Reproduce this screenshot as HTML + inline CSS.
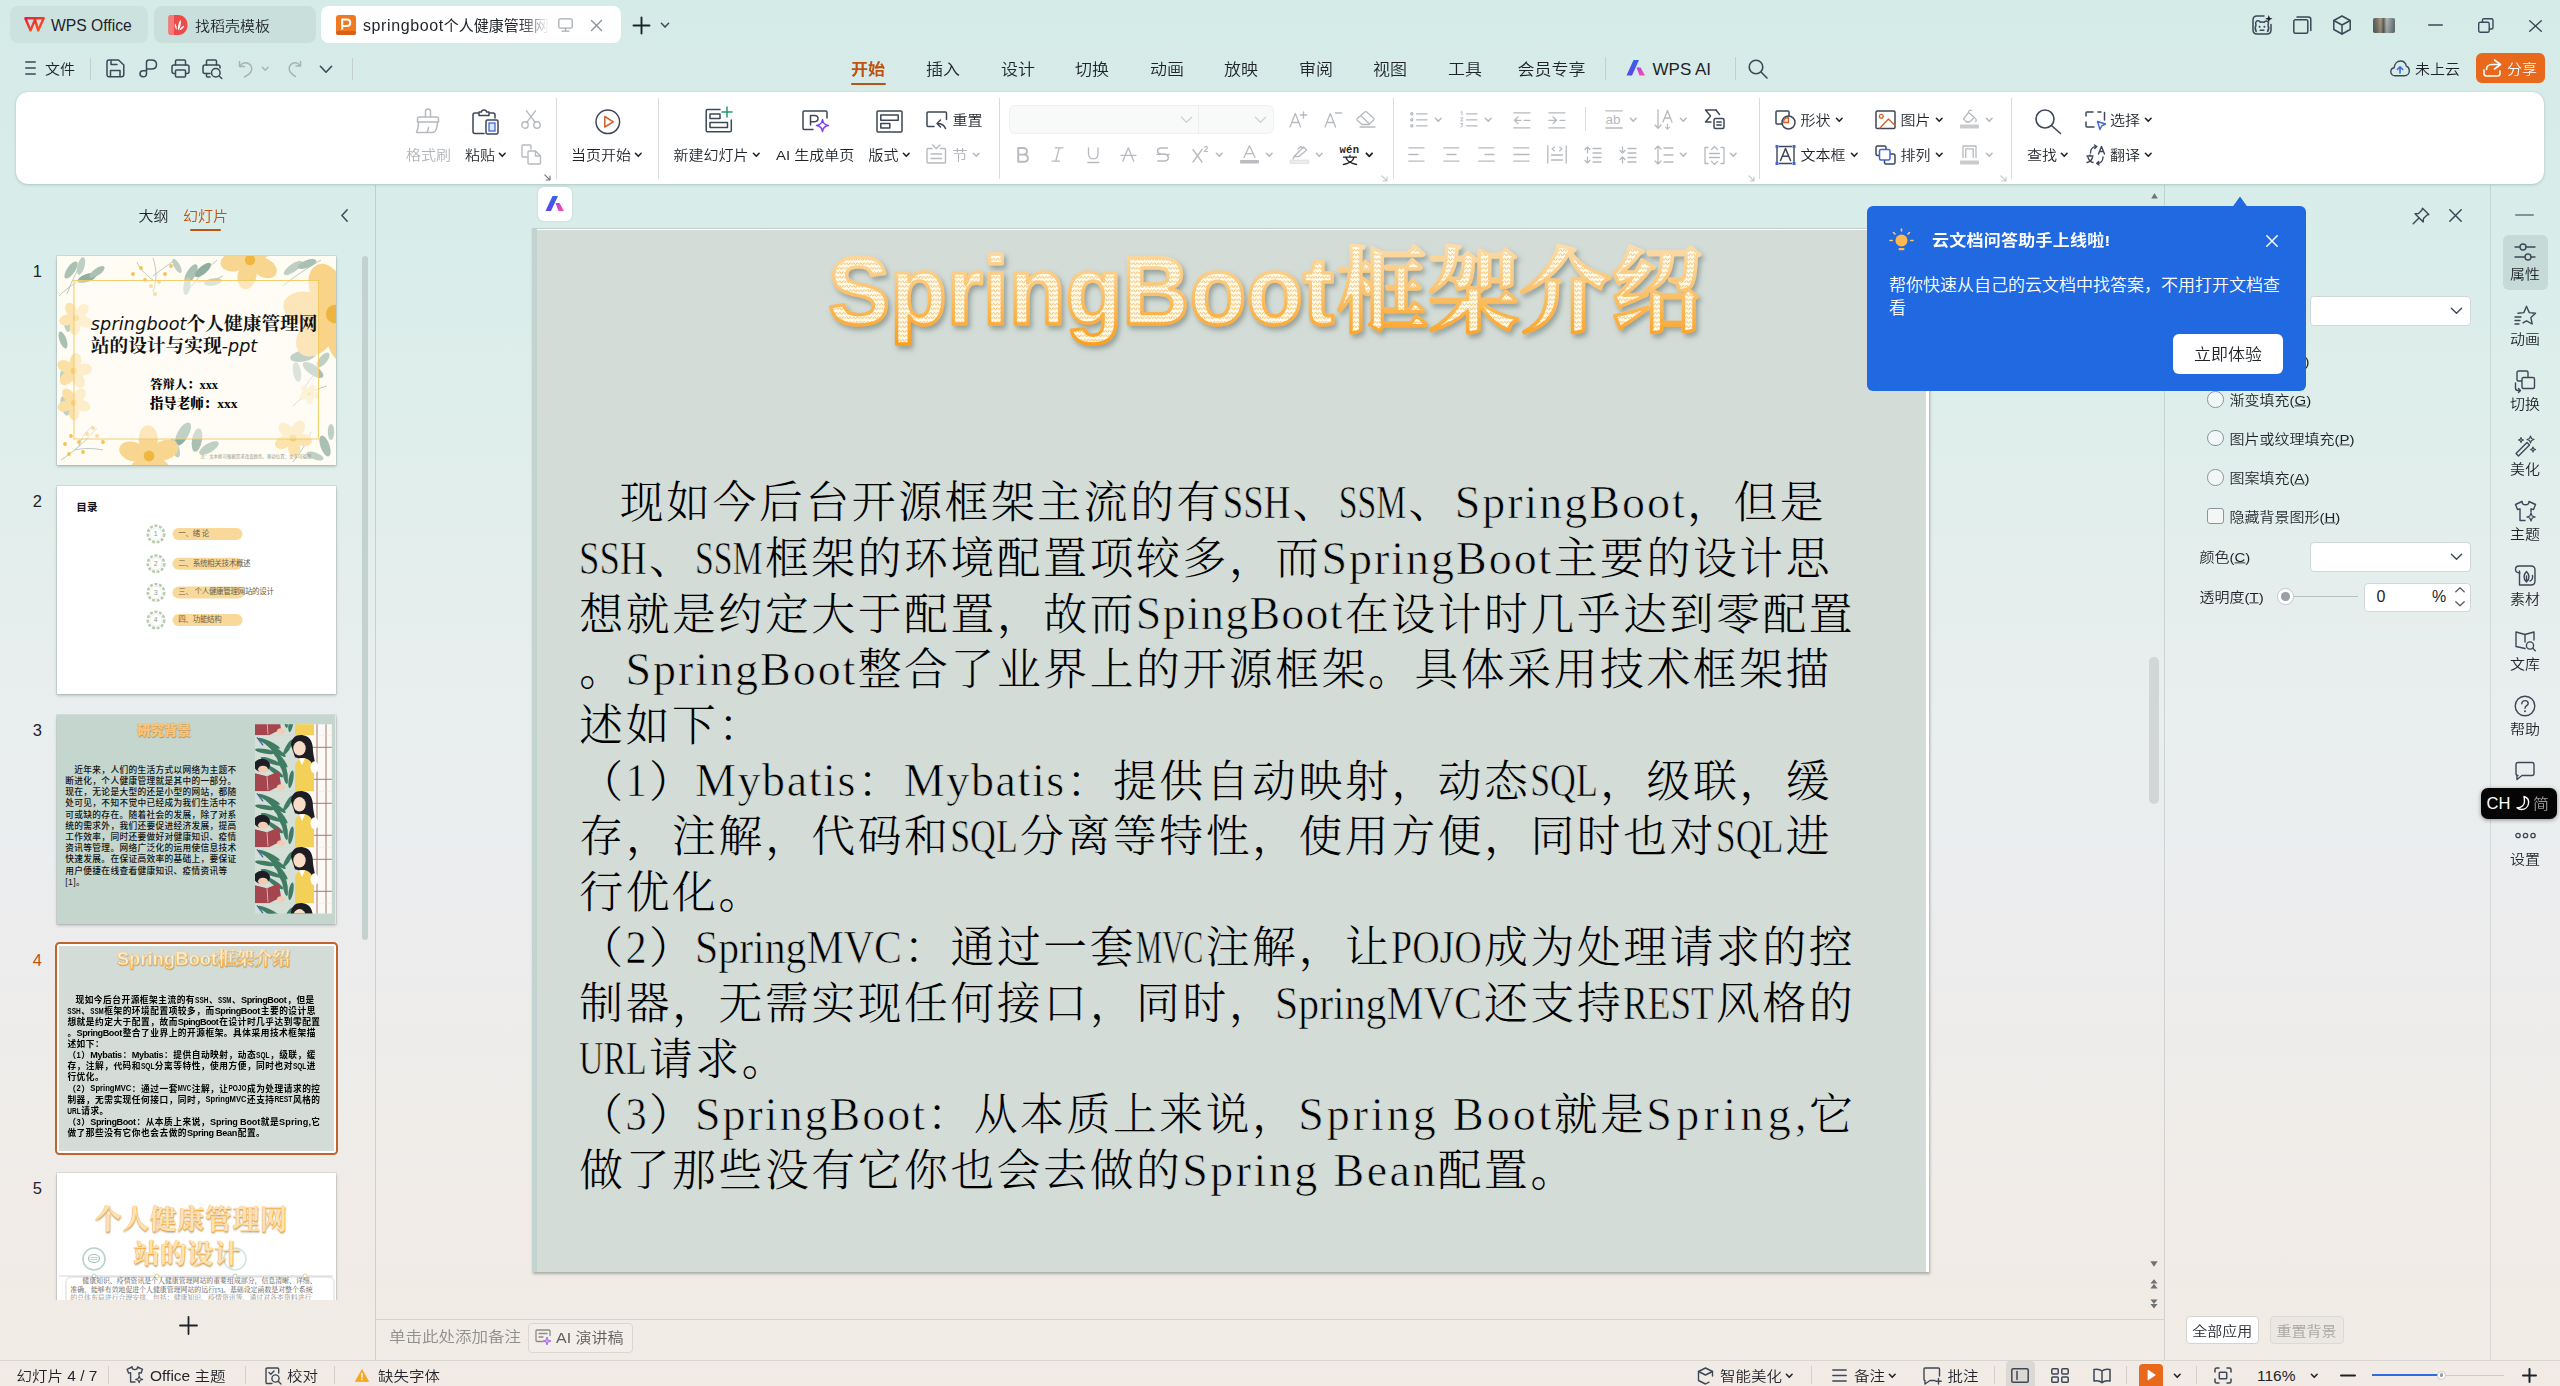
<!DOCTYPE html>
<html lang="zh-CN">
<head>
<meta charset="utf-8">
<title>springboot个人健康管理网站的设计与实现-ppt - WPS Office</title>
<style>
*{box-sizing:border-box;margin:0;padding:0}
html,body{width:2560px;height:1386px;overflow:hidden}
body{position:relative;font-family:"Liberation Sans","Noto Sans CJK SC",sans-serif;font-size:16px;color:#1f2329;
background:linear-gradient(180deg,#d5ebe8 0%,#d9edea 18%,#dfeeeb 30%,#e4eeec 40%,#e9eeee 52%,#ebedef 62%,#edecec 71%,#efece9 81%,#f1ebe6 92%,#f2ebe5 100%)}
.abs{position:absolute}
.t{position:absolute;white-space:nowrap;line-height:1}
.u{font-weight:350;transform:scaleY(.91)}
svg{position:absolute;overflow:visible}
.ic{fill:none;stroke:#3d4757;stroke-width:1.5;stroke-linecap:round;stroke-linejoin:round}
.icg{fill:none;stroke:#b4b8bd;stroke-width:1.5;stroke-linecap:round;stroke-linejoin:round}
.vsep{position:absolute;width:1px;background:#c9d3d2}
</style>
</head>
<body>
<!-- title bar -->
<div class="abs" style="left:9.5px;top:6px;width:138.5px;height:37px;background:#cce2df;border-radius:8px"></div>
<div class="abs" style="left:153.5px;top:6px;width:162.5px;height:37px;background:#c9dfdc;border-radius:8px"></div>
<div class="abs" style="left:321px;top:6px;width:300px;height:37px;background:#fff;border-radius:8px"></div>
<svg style="left:23.6px;top:17px;" width="21" height="15" viewBox="0 0 21 15"><defs><linearGradient id="wlg" x1="0" y1="0" x2="1" y2="1"><stop offset="0" stop-color="#e61f3a"/><stop offset="1" stop-color="#ff5a1a"/></linearGradient></defs><path d="M1.3 1.3 H19.7 L14.2 13.4 L11 2.6 L6.6 13.4 Z" fill="none" stroke="url(#wlg)" stroke-width="2.4" stroke-linejoin="round"/></svg>
<span class="t" style="left:51px;top:17.85px;font-size:15.7px;">WPS Office</span>
<svg style="left:168px;top:14px;" width="20" height="22" viewBox="0 0 20 22"><path d="M3 1 H10 C16 1 19.5 5.5 19.5 11 C19.5 16.5 16 21 10 21 H3 C1.5 21 0.5 20 0.5 18.5 V3.5 C0.5 2 1.5 1 3 1 Z" fill="#ee4a4a"/><path d="M0.5 3.5 C0.5 2 1.5 1 3 1 H6 V21 H3 C1.5 21 0.5 20 0.5 18.5 Z" fill="#f47b7b"/><path d="M10 16.5 C9.6 12.5 10.3 8.5 12.6 5.5 C13.4 9 12.8 13.2 10 16.5 Z M8.6 16 C7 14 6.4 11.8 7 9.6 C8.4 11.2 9 13.6 8.6 16 Z M11.4 16.2 C12.4 13.6 14 12 16.2 11.4 C15.8 13.8 14 15.6 11.4 16.2 Z" fill="#fff"/></svg>
<span class="t u" style="left:195px;top:18.2px;font-size:15px;">找稻壳模板</span>
<svg style="left:336px;top:15px;" width="20" height="20" viewBox="0 0 20 20"><rect x="0" y="0" width="20" height="20" rx="3" fill="#f07a22"/><rect x="0" y="16" width="20" height="4" rx="2" fill="#d9601a"/><path d="M6.2 14.5 V4.5 H10.8 C13 4.5 14.3 5.9 14.3 7.8 C14.3 9.7 13 11.1 10.8 11.1 H6.2" fill="none" stroke="#fff" stroke-width="2" stroke-linejoin="round"/></svg>
<span class="t" style="left:363px;top:16.7px;font-size:15px;width:186px;overflow:hidden;line-height:18px;height:20px;-webkit-mask-image:linear-gradient(90deg,#000 84%,transparent 100%);mask-image:linear-gradient(90deg,#000 84%,transparent 100%)"><span style="font-size:16px;letter-spacing:0.6px">springboot</span>个人健康管理网站</span>
<svg style="left:558px;top:18px;" width="15" height="14" viewBox="0 0 15 14"><rect x="0.8" y="0.8" width="13.4" height="9.4" rx="1.5" fill="none" stroke="#a7adb2" stroke-width="1.3"/><path d="M7.5 10.2 V13 M4 13.2 H11" fill="none" stroke="#a7adb2" stroke-width="1.3" stroke-linecap="round"/></svg>
<svg style="left:590.5px;top:19.5px;" width="11" height="11" viewBox="0 0 11 11"><path d="M0.5 0.5 L10.5 10.5 M10.5 0.5 L0.5 10.5" stroke="#8a9096" stroke-width="1.3" stroke-linecap="round"/></svg>
<svg style="left:632.5px;top:16.5px;" width="17" height="17" viewBox="0 0 17 17"><path d="M8.5 0.5 V16.5 M0.5 8.5 H16.5" stroke="#1f2329" stroke-width="1.9" stroke-linecap="round"/></svg>
<svg style="left:661px;top:22.8px" width="8" height="4.4" viewBox="0 0 8 4.4"><path d="M0.4 0.3 L4 4.1 L7.6 0.3" fill="none" stroke="#3d4757" stroke-width="1.5" stroke-linecap="round" stroke-linejoin="round"/></svg>
<svg style="left:2252px;top:15px;" width="21" height="20" viewBox="0 0 21 20"><g fill="none" stroke="#3d4757" stroke-width="1.5" stroke-linecap="round" stroke-linejoin="round"><path d="M12 1 H5 C2.5 1 1 2.5 1 5 V15 C1 17.5 2.5 19 5 19 H15 C17.5 19 19 17.5 19 15 V9.5"/><path d="M4.2 16.5 C3 14.5 3 12 4 10 C3.2 8.2 3.8 6.2 5.5 5.8 C6.8 5.5 7.8 6.2 8.3 7.2 C9.5 6.8 11 6.8 12.2 7.3 C12.8 6.3 14 5.8 15.2 6.3 C16.6 7 16.8 8.8 16 10.2 C17 12.3 16.8 14.8 15.6 16.5"/><path d="M8.2 15.3 H11.8"/></g><circle cx="7.6" cy="11.8" r="1" fill="#3d4757"/><circle cx="12.4" cy="11.8" r="1" fill="#3d4757"/><path d="M16.8 0 L17.8 2.7 L20.5 3.7 L17.8 4.7 L16.8 7.4 L15.8 4.7 L13.1 3.7 L15.8 2.7 Z" fill="#1f2329"/></svg>
<svg style="left:2293px;top:16px;" width="19" height="18" viewBox="0 0 19 18"><g fill="none" stroke="#3d4757" stroke-width="1.5" stroke-linejoin="round" stroke-linecap="round"><rect x="0.8" y="3.8" width="14" height="13.4" rx="1.5"/><path d="M4 1 H15.5 C17 1 17.8 1.8 17.8 3.3 V14.5"/></g></svg>
<svg style="left:2333px;top:15px;" width="18" height="20" viewBox="0 0 18 20"><g fill="none" stroke="#3d4757" stroke-width="1.5" stroke-linejoin="round" stroke-linecap="round"><path d="M9 1 L17.2 5.5 V14.5 L9 19 L0.8 14.5 V5.5 Z"/><path d="M0.8 5.5 L9 10 L17.2 5.5 M9 10 V19"/></g></svg>
<div class="abs" style="left:2373px;top:18px;width:22px;height:15px;border-radius:2px;background:linear-gradient(90deg,#4d5a55 0%,#7d7466 18%,#b9a48e 34%,#5b5a55 48%,#c8cdd1 62%,#9aa7ad 78%,#5e6b70 100%)"></div>
<div class="abs" style="left:2373px;top:18px;width:22px;height:15px;border-radius:2px;background:linear-gradient(180deg,rgba(120,120,110,.25),rgba(60,70,70,.35))"></div>
<svg style="left:2428px;top:24px;" width="15" height="2" viewBox="0 0 15 2"><path d="M0.7 1 H14.3" stroke="#3d4757" stroke-width="1.4" stroke-linecap="round"/></svg>
<svg style="left:2477.5px;top:17.5px;" width="16" height="15" viewBox="0 0 16 15"><g fill="none" stroke="#3d4757" stroke-width="1.4" stroke-linejoin="round" stroke-linecap="round"><rect x="0.7" y="4.3" width="10.5" height="10" rx="1.5"/><path d="M4.5 4 V2.2 C4.5 1.2 5 0.7 6 0.7 H13.5 C14.5 0.7 15 1.2 15 2.2 V9.5 C15 10.5 14.5 11 13.5 11 H11.5"/></g></svg>
<svg style="left:2528.5px;top:19.5px;" width="13" height="12" viewBox="0 0 13 12"><path d="M0.7 0.7 L12.3 11.3 M12.3 0.7 L0.7 11.3" stroke="#3d4757" stroke-width="1.4" stroke-linecap="round"/></svg>
<!-- menu row -->
<svg style="left:24.5px;top:61px;" width="11" height="14" viewBox="0 0 11 14"><path d="M0.7 1 H10.3 M0.7 7 H10.3 M0.7 13 H10.3" stroke="#3d4757" stroke-width="1.4" stroke-linecap="round"/></svg>
<span class="t u" style="left:45px;top:61px;font-size:15px;">文件</span>
<div class="abs" style="left:90px;top:58px;width:1px;height:22px;background:#c3cfcd"></div>
<svg style="left:106px;top:59px;" width="19" height="19" viewBox="0 0 19 19"><g fill="none" stroke="#3d4757" stroke-width="1.5" stroke-linecap="round" stroke-linejoin="round"><path d="M3 1 H12.5 L17.8 6 V15.5 C17.8 17 17 17.8 15.5 17.8 H3 C1.7 17.8 1 17 1 15.5 V3 C1 1.7 1.7 1 3 1 Z"/><path d="M5 1.5 V5.5 H11 M4.5 17.5 V11.5 H14 V17.5"/></g></svg>
<svg style="left:139px;top:59px;" width="19" height="19" viewBox="0 0 19 19"><g fill="none" stroke="#3d4757" stroke-width="1.5" stroke-linecap="round" stroke-linejoin="round"><path d="M7.5 10.5 V3.5 C7.5 2 8.3 1 10 1 H12.5 C15.5 1 17.5 2.8 17.5 5.5 C17.5 8.3 15.5 10 12.5 10 H7.5"/><path d="M7.5 10.5 V14.5 C7.5 16.5 6.3 17.8 4.3 17.8 C2.3 17.8 1 16.6 1 14.8 C1 13 2.3 11.8 4.3 11.8 H7"/></g></svg>
<svg style="left:171px;top:59px;" width="19" height="19" viewBox="0 0 19 19"><g fill="none" stroke="#3d4757" stroke-width="1.5" stroke-linecap="round" stroke-linejoin="round"><path d="M4.5 6 V2.3 C4.5 1.5 5 1 5.8 1 H13.2 C14 1 14.5 1.5 14.5 2.3 V6"/><rect x="1" y="6" width="17" height="8.5" rx="2"/><rect x="4.5" y="11" width="10" height="7" rx="1" fill="#d8ece9"/></g></svg>
<svg style="left:202px;top:59px;" width="21" height="20" viewBox="0 0 21 20"><g fill="none" stroke="#3d4757" stroke-width="1.5" stroke-linecap="round" stroke-linejoin="round"><path d="M4.5 6 V2.3 C4.5 1.5 5 1 5.8 1 H13.2 C14 1 14.5 1.5 14.5 2.3 V6"/><path d="M8 14.5 H3 C1.7 14.5 1 13.8 1 12.5 V8 C1 6.7 1.7 6 3 6 H16 C17.3 6 18 6.7 18 8 V9"/><path d="M4.5 14.5 V17 C4.5 17.6 4.9 18 5.5 18 H8"/><circle cx="13.8" cy="13.8" r="4.3"/><path d="M17 17 L19.8 19.5"/></g></svg>
<svg style="left:238px;top:60px;" width="16" height="18" viewBox="0 0 16 18"><g fill="none" stroke="#a9b3b5" stroke-width="1.5" stroke-linecap="round" stroke-linejoin="round"><path d="M1.5 1.5 V6.5 H6.5"/><path d="M2 6 C4 3 7.5 2 10.5 3.5 C14 5.3 14.8 9.5 12.5 12.5 C11.2 14.2 9.5 15.5 6.5 17"/></g></svg>
<svg style="left:261.5px;top:66.7px" width="6.5" height="3.6" viewBox="0 0 6.5 3.6"><path d="M0.4 0.3 L3.25 3.3 L6.1 0.3" fill="none" stroke="#a9b3b5" stroke-width="1.4" stroke-linecap="round" stroke-linejoin="round"/></svg>
<svg style="left:287px;top:60px;" width="15" height="18" viewBox="0 0 15 18"><g fill="none" stroke="#a9b3b5" stroke-width="1.5" stroke-linecap="round" stroke-linejoin="round"><path d="M13.5 1.5 V6 H9"/><path d="M13 5.5 C11 3 8 2.2 5.3 3.5 C2 5.2 1.3 9 3.3 12 C4.5 13.8 6 15 8.5 16.5"/></g></svg>
<svg style="left:320px;top:65.75px" width="12" height="6.5" viewBox="0 0 12 6.5"><path d="M0.4 0.3 L6 6.2 L11.6 0.3" fill="none" stroke="#3d4757" stroke-width="1.6" stroke-linecap="round" stroke-linejoin="round"/></svg>
<div class="abs" style="left:352px;top:58px;width:1px;height:22px;background:#c3cfcd"></div>
<span class="t u" style="left:851px;top:61.3px;font-size:17px;color:#c0510f;font-weight:700;">开始</span>
<div class="abs" style="left:851px;top:83px;width:35px;height:2px;background:#b3541a;border-radius:1px"></div>
<span class="t u" style="left:926px;top:61.3px;font-size:17px;">插入</span>
<span class="t u" style="left:1001px;top:61.3px;font-size:17px;">设计</span>
<span class="t u" style="left:1075px;top:61.3px;font-size:17px;">切换</span>
<span class="t u" style="left:1150px;top:61.3px;font-size:17px;">动画</span>
<span class="t u" style="left:1224px;top:61.3px;font-size:17px;">放映</span>
<span class="t u" style="left:1299px;top:61.3px;font-size:17px;">审阅</span>
<span class="t u" style="left:1373px;top:61.3px;font-size:17px;">视图</span>
<span class="t u" style="left:1448px;top:61.3px;font-size:17px;">工具</span>
<span class="t u" style="left:1517.5px;top:61.3px;font-size:17px;">会员专享</span>
<div class="abs" style="left:1605px;top:57px;width:1px;height:23px;background:#c3cfcd"></div>
<svg style="left:1626px;top:59px;" width="20" height="18" viewBox="0 0 20 18"><defs><linearGradient id="ai1" x1="0" y1="0" x2="0.3" y2="1"><stop offset="0" stop-color="#2a6af0"/><stop offset="1" stop-color="#5d45e8"/></linearGradient><linearGradient id="ai2" x1="0" y1="0" x2="1" y2="1"><stop offset="0" stop-color="#b43cf0"/><stop offset="1" stop-color="#ff4fa0"/></linearGradient></defs><path d="M7.5 1 H13 L6 16.5 H0.5 Z" fill="url(#ai1)"/><path d="M10.5 8.5 H14.5 L19 16.5 H13.5 Z" fill="url(#ai2)"/></svg>
<span class="t" style="left:1652.5px;top:61px;font-size:17px;">WPS AI</span>
<div class="abs" style="left:1735px;top:57px;width:1px;height:23px;background:#c3cfcd"></div>
<svg style="left:1747.5px;top:59px;" width="20" height="20" viewBox="0 0 20 20"><g fill="none" stroke="#3d4757" stroke-width="1.6" stroke-linecap="round"><circle cx="8" cy="8" r="6.8"/><path d="M13 13 L19 19"/></g></svg>
<svg style="left:2390px;top:59.5px;" width="20" height="17" viewBox="0 0 20 17"><path d="M5 15.8 C2.5 15.8 0.8 14 0.8 11.8 C0.8 9.8 2.2 8.2 4.2 7.8 C4.5 4 7 1 10.5 1 C13.5 1 15.8 3.2 16.3 6.2 C18.2 6.8 19.3 8.6 19.3 10.8 C19.3 13.6 17.3 15.8 14.5 15.8 Z" fill="none" stroke="#3d4757" stroke-width="1.4" stroke-linejoin="round"/><path d="M10 13 V7 M7.3 9.5 L10 6.8 L12.7 9.5" fill="none" stroke="#3b6fe0" stroke-width="1.6" stroke-linecap="round" stroke-linejoin="round"/></svg>
<span class="t u" style="left:2415px;top:61px;font-size:15px;">未上云</span>
<div class="abs" style="left:2475.5px;top:53px;width:69.5px;height:30px;background:#e8681c;border-radius:6px"></div>
<svg style="left:2483px;top:59px;" width="19" height="18" viewBox="0 0 19 18"><g fill="none" stroke="#fff" stroke-width="1.6" stroke-linecap="round" stroke-linejoin="round"><path d="M11.5 1 L17.5 5.5 L11.5 10"/><path d="M17 5.5 H9 C5.5 5.5 3.5 7.5 3.5 10.5"/><path d="M1 11 V14.5 C1 16 2 17 3.5 17 H14.5 C16 17 17 16 17 14.5 V12"/></g></svg>
<span class="t u" style="left:2507px;top:61px;font-size:15px;color:#fff;">分享</span>
<!-- ribbon -->
<div class="abs" style="left:16px;top:92px;width:2528px;height:92px;background:#fff;border-radius:12px;box-shadow:0 1px 3px rgba(80,110,110,.28),0 0 1px rgba(80,110,110,.3)"></div>
<svg style="left:415px;top:108px;" width="26" height="26" viewBox="0 0 26 26"><g fill="none" stroke="#b6babf" stroke-width="1.5" stroke-linecap="round" stroke-linejoin="round"><path d="M10.5 9 V3.5 C10.5 2 11.5 1 13 1 C14.5 1 15.5 2 15.5 3.5 V9"/><path d="M4 9 H22 C23 9 23.5 9.5 23.5 10.5 V14 H2.5 V10.5 C2.5 9.5 3 9 4 9 Z"/><path d="M3.5 14 C3.5 18 3 21.5 1.5 24.5 H17.5 C20.5 24.5 22.5 20 22.5 14"/><path d="M12 24 C13 22.5 13.5 21 13.5 19.5"/></g></svg>
<span class="t u" style="left:406px;top:147px;font-size:15px;color:#b0b4b9;">格式刷</span>
<svg style="left:472px;top:108.5px;" width="28" height="26" viewBox="0 0 28 26"><g fill="none" stroke="#3d4757" stroke-width="1.5" stroke-linecap="round" stroke-linejoin="round"><path d="M6 4 H3 C1.8 4 1 4.8 1 6 V22.5 C1 23.7 1.8 24.5 3 24.5 H12"/><path d="M18 4 H21 C22.2 4 23 4.8 23 6 V9"/><path d="M7 6.5 V3 H9.5 C9.5 1.8 10.5 1 12 1 C13.5 1 14.5 1.8 14.5 3 H17 V6.5 Z"/></g><rect x="14" y="11" width="12" height="14" rx="1.5" fill="#fff" stroke="#3d4757" stroke-width="1.5"/><rect x="17" y="14" width="6" height="8" fill="#dfe7fb" stroke="#3f66d8" stroke-width="1.3"/></svg>
<span class="t u" style="left:465px;top:147px;font-size:15px;">粘贴</span>
<svg style="left:498.5px;top:153.2px" width="6.5" height="3.6" viewBox="0 0 6.5 3.6"><path d="M0.4 0.3 L3.25 3.3 L6.1 0.3" fill="none" stroke="#1f2329" stroke-width="1.6" stroke-linecap="round" stroke-linejoin="round"/></svg>
<svg style="left:521px;top:110px;" width="20" height="19" viewBox="0 0 20 19"><g fill="none" stroke="#b6babf" stroke-width="1.4" stroke-linecap="round" stroke-linejoin="round"><circle cx="4" cy="15" r="3.2"/><circle cx="16" cy="15" r="3.2"/><path d="M5.8 12.3 L14.5 0.8 M14.2 12.3 L5.5 0.8"/></g></svg>
<svg style="left:521px;top:143.5px;" width="21" height="21" viewBox="0 0 21 21"><g fill="none" stroke="#b6babf" stroke-width="1.4" stroke-linecap="round" stroke-linejoin="round"><path d="M6 13 H2 C1.3 13 1 12.7 1 12 V2 C1 1.3 1.3 1 2 1 H9 C9.7 1 10 1.3 10 2 V5"/><path d="M8 7 H14.5 L19.5 12 V19 C19.5 19.7 19.2 20 18.5 20 H8 C7.3 20 7 19.7 7 19 V8 C7 7.3 7.3 7 8 7 Z"/><path d="M14.5 7.5 V12 H19"/></g></svg>
<svg style="left:543.5px;top:173.5px;" width="7" height="7" viewBox="0 0 7 7"><path d="M0.8 0.8 L6 6 M6 2 V6 H2" fill="none" stroke="#6f767d" stroke-width="1.1" stroke-linecap="round" stroke-linejoin="round"/></svg>
<div class="abs" style="left:555.5px;top:97.5px;width:1px;height:81.5px;background:#d9dcde"></div>
<svg style="left:594.5px;top:108.5px;" width="26" height="26" viewBox="0 0 26 26"><circle cx="12.8" cy="12.8" r="11.8" fill="none" stroke="#3d4757" stroke-width="1.5"/><path d="M9.8 7.5 L18.3 12.8 L9.8 18 Z" fill="none" stroke="#d2622a" stroke-width="1.5" stroke-linejoin="round"/></svg>
<span class="t u" style="left:571px;top:147px;font-size:15px;">当页开始</span>
<svg style="left:634.5px;top:153.2px" width="6.5" height="3.6" viewBox="0 0 6.5 3.6"><path d="M0.4 0.3 L3.25 3.3 L6.1 0.3" fill="none" stroke="#1f2329" stroke-width="1.6" stroke-linecap="round" stroke-linejoin="round"/></svg>
<div class="abs" style="left:658px;top:97.5px;width:1px;height:81.5px;background:#d9dcde"></div>
<svg style="left:704.5px;top:106px;" width="28" height="27" viewBox="0 0 28 27"><g fill="none" stroke="#3d4757" stroke-width="1.5" stroke-linecap="round" stroke-linejoin="round"><path d="M15 3.5 H2.5 C1.7 3.5 1.2 4 1.2 4.8 V24.5 C1.2 25.3 1.7 25.8 2.5 25.8 H25 C25.8 25.8 26.3 25.3 26.3 24.5 V14"/><rect x="5" y="8" width="10" height="4.5"/><rect x="5" y="16.5" width="17.5" height="5"/></g><path d="M22 1 V11 M17 6 H27" fill="none" stroke="#1f9c6b" stroke-width="1.5" stroke-linecap="round"/></svg>
<span class="t u" style="left:673.5px;top:147px;font-size:15px;">新建幻灯片</span>
<svg style="left:753px;top:153.2px" width="6.5" height="3.6" viewBox="0 0 6.5 3.6"><path d="M0.4 0.3 L3.25 3.3 L6.1 0.3" fill="none" stroke="#1f2329" stroke-width="1.6" stroke-linecap="round" stroke-linejoin="round"/></svg>
<svg style="left:802px;top:110px;" width="28" height="27" viewBox="0 0 28 27"><g fill="none" stroke="#3d4757" stroke-width="1.5" stroke-linecap="round" stroke-linejoin="round"><path d="M11 19.5 H2.2 C1.5 19.5 1 19 1 18.3 V2.2 C1 1.5 1.5 1 2.2 1 H23.8 C24.5 1 25 1.5 25 2.2 V8"/><path d="M8.5 15 V5.5 H12.5 C14.7 5.5 16 6.8 16 8.6 C16 10.4 14.7 11.7 12.5 11.7 H8.5"/></g><path d="M20.5 9.5 C21 13.5 22.5 15 26.5 15.5 C22.5 16 21 17.5 20.5 21.5 C20 17.5 18.5 16 14.5 15.5 C18.5 15 20 13.5 20.5 9.5 Z" fill="#fff" stroke="#7a3ff0" stroke-width="1.5" stroke-linejoin="round"/></svg>
<span class="t u" style="left:776px;top:147px;font-size:15px;">AI 生成单页</span>
<svg style="left:876px;top:110px;" width="27" height="23" viewBox="0 0 27 23"><g fill="none" stroke="#3d4757" stroke-width="1.5" stroke-linecap="round" stroke-linejoin="round"><rect x="1" y="1" width="25" height="21" rx="1"/><rect x="4.8" y="5" width="17.4" height="5.2"/><rect x="4.8" y="13.6" width="9" height="4.4"/></g></svg>
<span class="t u" style="left:868.5px;top:147px;font-size:15px;">版式</span>
<svg style="left:902.5px;top:153.2px" width="6.5" height="3.6" viewBox="0 0 6.5 3.6"><path d="M0.4 0.3 L3.25 3.3 L6.1 0.3" fill="none" stroke="#1f2329" stroke-width="1.6" stroke-linecap="round" stroke-linejoin="round"/></svg>
<svg style="left:926px;top:110.5px;" width="22" height="19" viewBox="0 0 22 19"><g fill="none" stroke="#3d4757" stroke-width="1.5" stroke-linecap="round" stroke-linejoin="round"><path d="M8 15.5 H2 C1.4 15.5 1 15.1 1 14.5 V2 C1 1.4 1.4 1 2 1 H19.5 C20.1 1 20.5 1.4 20.5 2 V8.5"/><path d="M19.5 17.5 C18 14 15 12.5 11.5 12.5 M14.5 9 L11 12.5 L14.5 16"/></g></svg>
<span class="t u" style="left:952.5px;top:112px;font-size:15px;">重置</span>
<svg style="left:926px;top:143.5px;" width="21" height="20" viewBox="0 0 21 20"><g fill="none" stroke="#b6babf" stroke-width="1.4" stroke-linecap="round" stroke-linejoin="round"><path d="M6.5 1 L10.3 4.5 L14 1"/><path d="M6 4.5 H2 C1.4 4.5 1 4.9 1 5.5 V18 C1 18.6 1.4 19 2 19 H18.5 C19.1 19 19.5 18.6 19.5 18 V5.5 C19.5 4.9 19.1 4.5 18.5 4.5 H14.5"/><path d="M5 10 H15.5 M5 14.5 H15.5"/></g></svg>
<span class="t u" style="left:952.5px;top:147px;font-size:15px;color:#b0b4b9;">节</span>
<svg style="left:972.5px;top:153.2px" width="6.5" height="3.6" viewBox="0 0 6.5 3.6"><path d="M0.4 0.3 L3.25 3.3 L6.1 0.3" fill="none" stroke="#b6babf" stroke-width="1.6" stroke-linecap="round" stroke-linejoin="round"/></svg>
<div class="abs" style="left:998.5px;top:97.5px;width:1px;height:81.5px;background:#d9dcde"></div>
<div class="abs" style="left:1008.5px;top:104.5px;width:265px;height:29.5px;background:#f8f9f9;border:1px solid #eff0f0;border-radius:6px"></div>
<div class="abs" style="left:1197.5px;top:105px;width:1px;height:28.5px;background:#eceeee"></div>
<svg style="left:1180.5px;top:117.25px" width="11" height="5.5" viewBox="0 0 11 5.5"><path d="M0.4 0.3 L5.5 5.2 L10.6 0.3" fill="none" stroke="#cfd2d5" stroke-width="1.3" stroke-linecap="round" stroke-linejoin="round"/></svg>
<svg style="left:1254.5px;top:117.25px" width="11" height="5.5" viewBox="0 0 11 5.5"><path d="M0.4 0.3 L5.5 5.2 L10.6 0.3" fill="none" stroke="#cfd2d5" stroke-width="1.3" stroke-linecap="round" stroke-linejoin="round"/></svg>
<svg style="left:1288.5px;top:110.5px;" width="19" height="17" viewBox="0 0 19 17"><g fill="none" stroke="#b6babf" stroke-width="1.3" stroke-linecap="round" stroke-linejoin="round"><path d="M1 16 L6.3 2.5 L11.6 16 M2.8 11.5 H9.8"/><path d="M14.5 0.8 V7.2 M11.3 4 H17.7"/></g></svg>
<svg style="left:1323.5px;top:110.5px;" width="19" height="17" viewBox="0 0 19 17"><g fill="none" stroke="#b6babf" stroke-width="1.3" stroke-linecap="round" stroke-linejoin="round"><path d="M1 16 L6.3 2.5 L11.6 16 M2.8 11.5 H9.8"/><path d="M11.5 2 H17.5"/></g></svg>
<svg style="left:1356px;top:111px;" width="20" height="17" viewBox="0 0 20 17"><g fill="none" stroke="#b6babf" stroke-width="1.3" stroke-linecap="round" stroke-linejoin="round"><path d="M8.5 1.2 C9.3 0.6 10.3 0.6 11 1.2 L17.5 7 C18.2 7.7 18.2 8.5 17.5 9.2 L13 13.5 H6 L1.5 9.5 C0.8 8.8 0.8 8 1.5 7.3 Z"/><path d="M5 5 L13.5 13"/><path d="M4 16 H19"/></g></svg>
<svg style="left:1017px;top:146.5px;" width="12" height="16" viewBox="0 0 12 16"><path d="M1.2 1 H6 C8.6 1 10 2.3 10 4.3 C10 6.3 8.6 7.6 6 7.6 H1.2 Z M1.2 7.6 H6.6 C9.4 7.6 10.9 9 10.9 11.2 C10.9 13.4 9.4 14.8 6.6 14.8 H1.2 Z" fill="none" stroke="#b6babf" stroke-width="1.9" stroke-linejoin="round"/></svg>
<svg style="left:1051px;top:147px;" width="13" height="15" viewBox="0 0 13 15"><g fill="none" stroke="#b6babf" stroke-width="1.3" stroke-linecap="round" stroke-linejoin="round"><path d="M4 0.8 H12 M1 14.2 H8.5 M8.3 0.8 L4.7 14.2"/></g></svg>
<svg style="left:1087px;top:146.5px;" width="13" height="17" viewBox="0 0 13 17"><g fill="none" stroke="#b6babf" stroke-width="1.3" stroke-linecap="round" stroke-linejoin="round"><path d="M1.5 0.8 V7 C1.5 10 3.3 11.8 6.3 11.8 C9.3 11.8 11 10 11 7 V0.8 M0.8 15.5 H11.8"/></g></svg>
<svg style="left:1120px;top:147px;" width="17" height="15" viewBox="0 0 17 15"><g fill="none" stroke="#b6babf" stroke-width="1.3" stroke-linecap="round" stroke-linejoin="round"><path d="M2.8 14.2 L8.3 0.8 L13.8 14.2"/><path d="M0.8 8.3 H16"/></g></svg>
<svg style="left:1156px;top:147px;" width="14" height="15" viewBox="0 0 14 15"><g fill="none" stroke="#b6babf" stroke-width="1.5" stroke-linecap="round" stroke-linejoin="round"><path d="M11.5 1 H5.5 C3 1 1.5 2.2 1.5 4 C1.5 5.8 2.8 6.8 5 7.3 H9 C11 7.6 12.3 8.8 12.3 10.6 C12.3 12.6 10.8 14 8.3 14 H1.8"/><path d="M0.8 7.4 H13.2" stroke-width="1.2"/></g></svg>
<svg style="left:1192px;top:146px;" width="18" height="17" viewBox="0 0 18 17"><g fill="none" stroke="#b6babf" stroke-width="1.3" stroke-linecap="round" stroke-linejoin="round"><path d="M1 3.5 L10 16 M10 3.5 L1 16"/></g></svg>
<span class="t" style="left:1203.5px;top:145.25px;font-size:8.5px;color:#b6babf;font-weight:700;">2</span>
<svg style="left:1216px;top:153.2px" width="6.5" height="3.6" viewBox="0 0 6.5 3.6"><path d="M0.4 0.3 L3.25 3.3 L6.1 0.3" fill="none" stroke="#b6babf" stroke-width="1.6" stroke-linecap="round" stroke-linejoin="round"/></svg>
<svg style="left:1240px;top:145px;" width="19" height="19" viewBox="0 0 19 19"><g fill="none" stroke="#b6babf" stroke-width="1.3" stroke-linecap="round" stroke-linejoin="round"><path d="M4 12.5 L9.5 0.8 L15 12.5 M5.8 8.6 H13.2"/></g><rect x="0" y="15" width="19" height="3.6" rx="0.8" fill="#b9bcc0"/></svg>
<svg style="left:1266px;top:153.2px" width="6.5" height="3.6" viewBox="0 0 6.5 3.6"><path d="M0.4 0.3 L3.25 3.3 L6.1 0.3" fill="none" stroke="#b6babf" stroke-width="1.6" stroke-linecap="round" stroke-linejoin="round"/></svg>
<svg style="left:1290px;top:145px;" width="19" height="19" viewBox="0 0 19 19"><g fill="none" stroke="#b6babf" stroke-width="1.3" stroke-linecap="round" stroke-linejoin="round"><path d="M4 11.5 L13.5 2 L16.5 5 L9 11.5 Z M4 11.5 L3 14 M8 4 L11 1.5 L13 3.5"/></g><rect x="0" y="15" width="19" height="3.6" rx="0.8" fill="#e9ebec" stroke="#d7dadc" stroke-width="0.6"/></svg>
<svg style="left:1316px;top:153.2px" width="6.5" height="3.6" viewBox="0 0 6.5 3.6"><path d="M0.4 0.3 L3.25 3.3 L6.1 0.3" fill="none" stroke="#b6babf" stroke-width="1.6" stroke-linecap="round" stroke-linejoin="round"/></svg>
<span class="t" style="left:1339.5px;top:144.75px;font-size:10.5px;font-weight:700;letter-spacing:0.3px;font-family:'Liberation Mono',monospace;">wén</span>
<svg style="left:1342px;top:155px;" width="16" height="10" viewBox="0 0 16 10"><g fill="none" stroke="#1f2329" stroke-width="1.3" stroke-linecap="round" stroke-linejoin="round"><path d="M8 0.5 V2 M1.5 2.2 H14.5 M4 2.5 C5 6 9 8.5 14.5 9.5 M12 2.5 C11 6 7 8.5 1.5 9.5"/></g></svg>
<svg style="left:1366px;top:153.2px" width="6.5" height="3.6" viewBox="0 0 6.5 3.6"><path d="M0.4 0.3 L3.25 3.3 L6.1 0.3" fill="none" stroke="#1f2329" stroke-width="1.8" stroke-linecap="round" stroke-linejoin="round"/></svg>
<svg style="left:1381px;top:174.5px;" width="7" height="7" viewBox="0 0 7 7"><path d="M0.8 0.8 L6 6 M6 2 V6 H2" fill="none" stroke="#c4c8cb" stroke-width="1.1" stroke-linecap="round" stroke-linejoin="round"/></svg>
<div class="abs" style="left:1392.5px;top:97.5px;width:1px;height:81.5px;background:#d9dcde"></div>
<svg style="left:1410px;top:112px;" width="18" height="16" viewBox="0 0 18 16"><g fill="none" stroke="#b6babf" stroke-width="1.3" stroke-linecap="round" stroke-linejoin="round"><circle cx="1.8" cy="1.8" r="1.1"/><circle cx="1.8" cy="7.8" r="1.1"/><circle cx="1.8" cy="13.8" r="1.1"/><path d="M6.5 1.8 H17 M6.5 7.8 H17 M6.5 13.8 H17"/></g></svg>
<svg style="left:1435px;top:118.2px" width="6.5" height="3.6" viewBox="0 0 6.5 3.6"><path d="M0.4 0.3 L3.25 3.3 L6.1 0.3" fill="none" stroke="#b6babf" stroke-width="1.6" stroke-linecap="round" stroke-linejoin="round"/></svg>
<svg style="left:1460px;top:111px;" width="18" height="17" viewBox="0 0 18 17"><g fill="none" stroke="#b6babf" stroke-width="1.3" stroke-linecap="round" stroke-linejoin="round"><path d="M6.5 2.8 H17 M6.5 8.8 H17 M6.5 14.8 H17"/><path d="M1 1 L2 0.6 V4 M0.8 6.8 H2.8 L0.8 10 H3 M0.8 12.6 H2.8 L1.5 14 C3.2 14 3.2 16.2 0.8 16" stroke-width="1"/></g></svg>
<svg style="left:1485px;top:118.2px" width="6.5" height="3.6" viewBox="0 0 6.5 3.6"><path d="M0.4 0.3 L3.25 3.3 L6.1 0.3" fill="none" stroke="#b6babf" stroke-width="1.6" stroke-linecap="round" stroke-linejoin="round"/></svg>
<svg style="left:1512.5px;top:111.5px;" width="18" height="17" viewBox="0 0 18 17"><g fill="none" stroke="#b6babf" stroke-width="1.3" stroke-linecap="round" stroke-linejoin="round"><path d="M0.8 0.8 H17 M0.8 15.8 H17 M2 8.3 H8 M11 8.3 H17 M5 5 L1.5 8.3 L5 11.6"/></g></svg>
<svg style="left:1547.5px;top:111.5px;" width="18" height="17" viewBox="0 0 18 17"><g fill="none" stroke="#b6babf" stroke-width="1.3" stroke-linecap="round" stroke-linejoin="round"><path d="M0.8 0.8 H17 M0.8 15.8 H17 M0.8 8.3 H8 M12 8.3 H17 M5 5 L8.5 8.3 L5 11.6"/></g></svg>
<div class="abs" style="left:1584.5px;top:107px;width:1px;height:23.5px;background:#d9dcde"></div>
<svg style="left:1605px;top:110px;" width="18" height="19" viewBox="0 0 18 19"><g fill="none" stroke="#b6babf" stroke-width="1.3" stroke-linecap="round" stroke-linejoin="round"><path d="M0.8 0.8 H17.2 M0.8 18 H17.2"/></g></svg>
<span class="t" style="left:1605.5px;top:113.25px;font-size:13.5px;color:#b6babf;">ab</span>
<svg style="left:1630px;top:118.2px" width="6.5" height="3.6" viewBox="0 0 6.5 3.6"><path d="M0.4 0.3 L3.25 3.3 L6.1 0.3" fill="none" stroke="#b6babf" stroke-width="1.6" stroke-linecap="round" stroke-linejoin="round"/></svg>
<svg style="left:1653.5px;top:109px;" width="21" height="21" viewBox="0 0 21 21"><g fill="none" stroke="#b6babf" stroke-width="1.3" stroke-linecap="round" stroke-linejoin="round"><path d="M4 1 V19 M1 16 L4 19.3 L7 16"/><path d="M9 13 L13.5 1.5 L18 13 M10.6 9 H16.4"/><path d="M13.5 15 V20 M11.5 18.2 L13.5 20.2 L15.5 18.2" stroke-width="1.1"/></g></svg>
<svg style="left:1680px;top:118.2px" width="6.5" height="3.6" viewBox="0 0 6.5 3.6"><path d="M0.4 0.3 L3.25 3.3 L6.1 0.3" fill="none" stroke="#b6babf" stroke-width="1.6" stroke-linecap="round" stroke-linejoin="round"/></svg>
<svg style="left:1703.5px;top:108.5px;" width="21" height="21" viewBox="0 0 21 21"><g fill="none" stroke="#3d4757" stroke-width="1.5" stroke-linecap="round" stroke-linejoin="round"><path d="M12 1 H1.5 L6.5 7 L1.5 13 H7"/><path d="M12 1 L15.5 5.5"/><rect x="10" y="9.5" width="10" height="10" rx="1.5"/><path d="M12.8 13 H17.2 M12.8 16 H17.2"/></g></svg>
<svg style="left:1408px;top:147px;" width="17" height="15" viewBox="0 0 17 15"><path d="M0.8 0.8 H16 M0.8 7.5 H10 M0.8 14.2 H16" fill="none" stroke="#b6babf" stroke-width="1.3" stroke-linecap="round"/></svg>
<svg style="left:1443px;top:147px;" width="17" height="15" viewBox="0 0 17 15"><path d="M0.8 0.8 H16 M4 7.5 H13 M0.8 14.2 H16" fill="none" stroke="#b6babf" stroke-width="1.3" stroke-linecap="round"/></svg>
<svg style="left:1478px;top:147px;" width="17" height="15" viewBox="0 0 17 15"><path d="M0.8 0.8 H16 M7 7.5 H16 M0.8 14.2 H16" fill="none" stroke="#b6babf" stroke-width="1.3" stroke-linecap="round"/></svg>
<svg style="left:1513px;top:147px;" width="17" height="15" viewBox="0 0 17 15"><path d="M0.8 0.8 H16 M0.8 7.5 H16 M0.8 14.2 H16" fill="none" stroke="#b6babf" stroke-width="1.3" stroke-linecap="round"/></svg>
<svg style="left:1547px;top:145px;" width="20" height="19" viewBox="0 0 20 19"><g fill="none" stroke="#b6babf" stroke-width="1.3" stroke-linecap="round" stroke-linejoin="round"><path d="M0.8 0.8 V18 M19.2 0.8 V18 M4.5 10 H15.5 M4.5 15 H15.5"/><path d="M7.5 2 L5 4 L7.5 6 M12.5 2 L15 4 L12.5 6" stroke-width="1.1"/></g></svg>
<svg style="left:1583.5px;top:145.5px;" width="18" height="18" viewBox="0 0 18 18"><g fill="none" stroke="#b6babf" stroke-width="1.3" stroke-linecap="round" stroke-linejoin="round"><path d="M3.5 1 V7 M1 3.5 L3.5 1 L6 3.5 M3.5 17 V11 M1 14.5 L3.5 17 L6 14.5"/><path d="M9 2.5 H17 M9 7 H17 M9 11.5 H17 M9 16 H17"/></g></svg>
<svg style="left:1618.5px;top:145.5px;" width="18" height="18" viewBox="0 0 18 18"><g fill="none" stroke="#b6babf" stroke-width="1.3" stroke-linecap="round" stroke-linejoin="round"><path d="M3.5 1 V7 M1 4.5 L3.5 7 L6 4.5 M3.5 17 V11 M1 13.5 L3.5 11 L6 13.5"/><path d="M9 2.5 H17 M9 7 H17 M9 11.5 H17 M9 16 H17"/></g></svg>
<svg style="left:1653.5px;top:145px;" width="20" height="20" viewBox="0 0 20 20"><g fill="none" stroke="#b6babf" stroke-width="1.3" stroke-linecap="round" stroke-linejoin="round"><path d="M4 1 V19 M1 4 L4 1 L7 4 M1 16 L4 19 L7 16"/><path d="M10 3 H19 M10 10 H19 M10 17 H19"/></g></svg>
<svg style="left:1680px;top:153.2px" width="6.5" height="3.6" viewBox="0 0 6.5 3.6"><path d="M0.4 0.3 L3.25 3.3 L6.1 0.3" fill="none" stroke="#b6babf" stroke-width="1.6" stroke-linecap="round" stroke-linejoin="round"/></svg>
<svg style="left:1703.5px;top:144.5px;" width="21" height="21" viewBox="0 0 21 21"><g fill="none" stroke="#b6babf" stroke-width="1.3" stroke-linecap="round" stroke-linejoin="round"><path d="M4 2.5 H1 V18.5 H4 M17 2.5 H20 V18.5 H17"/><path d="M5.5 8.5 H15.5 M5.5 12.5 H15.5 M7.5 4.5 L10.5 1.5 L13.5 4.5 M7.5 16.5 L10.5 19.5 L13.5 16.5"/></g></svg>
<svg style="left:1730px;top:153.2px" width="6.5" height="3.6" viewBox="0 0 6.5 3.6"><path d="M0.4 0.3 L3.25 3.3 L6.1 0.3" fill="none" stroke="#b6babf" stroke-width="1.6" stroke-linecap="round" stroke-linejoin="round"/></svg>
<svg style="left:1748px;top:174.5px;" width="7" height="7" viewBox="0 0 7 7"><path d="M0.8 0.8 L6 6 M6 2 V6 H2" fill="none" stroke="#c4c8cb" stroke-width="1.1" stroke-linecap="round" stroke-linejoin="round"/></svg>
<div class="abs" style="left:1758.5px;top:97.5px;width:1px;height:81.5px;background:#d9dcde"></div>
<svg style="left:1775px;top:109.5px;" width="21" height="20" viewBox="0 0 21 20"><g fill="none" stroke="#3d4757" stroke-width="1.5" stroke-linecap="round" stroke-linejoin="round"><path d="M7.5 14 H2 C1.4 14 1 13.6 1 13 V2 C1 1.4 1.4 1 2 1 H13 C13.6 1 14 1.4 14 2 V5.5"/><circle cx="13.5" cy="12.5" r="6.5"/></g><path d="M13.5 12.5 V7.5 C10.5 7.5 8.5 9.7 8.5 12.5 Z" fill="#fbe3d6" stroke="#d2622a" stroke-width="1.3" stroke-linejoin="round"/></svg>
<span class="t u" style="left:1800.5px;top:112px;font-size:15px;">形状</span>
<svg style="left:1835.5px;top:118.2px" width="6.5" height="3.6" viewBox="0 0 6.5 3.6"><path d="M0.4 0.3 L3.25 3.3 L6.1 0.3" fill="none" stroke="#1f2329" stroke-width="1.6" stroke-linecap="round" stroke-linejoin="round"/></svg>
<svg style="left:1875px;top:110px;" width="21" height="20" viewBox="0 0 21 20"><rect x="1" y="1" width="19" height="17.5" rx="1.2" fill="none" stroke="#3d4757" stroke-width="1.5"/><circle cx="6.3" cy="6.3" r="1.9" fill="none" stroke="#d2622a" stroke-width="1.3"/><path d="M5 18 L13.5 9 L20 15.5" fill="none" stroke="#d2622a" stroke-width="1.4" stroke-linejoin="round" stroke-linecap="round"/></svg>
<span class="t u" style="left:1900.5px;top:112px;font-size:15px;">图片</span>
<svg style="left:1935.5px;top:118.2px" width="6.5" height="3.6" viewBox="0 0 6.5 3.6"><path d="M0.4 0.3 L3.25 3.3 L6.1 0.3" fill="none" stroke="#1f2329" stroke-width="1.6" stroke-linecap="round" stroke-linejoin="round"/></svg>
<svg style="left:1960px;top:108.5px;" width="20" height="20" viewBox="0 0 20 20"><g fill="none" stroke="#b6babf" stroke-width="1.3" stroke-linecap="round" stroke-linejoin="round"><path d="M8.5 3.5 L14.5 8.5 L9.5 13 H6.5 L3.5 10 Z M8.5 3.5 C8.5 1.5 10 0.8 11.5 1.5 M15.5 9.5 C16.5 11 16.5 12 15.5 12.5"/></g><rect x="0" y="15.5" width="19" height="4" rx="0.8" fill="#c9cccf"/></svg>
<svg style="left:1985.5px;top:118.2px" width="6.5" height="3.6" viewBox="0 0 6.5 3.6"><path d="M0.4 0.3 L3.25 3.3 L6.1 0.3" fill="none" stroke="#b6babf" stroke-width="1.6" stroke-linecap="round" stroke-linejoin="round"/></svg>
<svg style="left:1775px;top:144.5px;" width="21" height="20" viewBox="0 0 21 20"><path d="M2 3 V17 M19 3 V17 M4 1.5 H17 M4 18.5 H17" fill="none" stroke="#3d4757" stroke-width="1.4"/><g fill="#3f66d8"><rect x="0.5" y="0" width="3" height="3"/><rect x="17.5" y="0" width="3" height="3"/><rect x="0.5" y="17" width="3" height="3"/><rect x="17.5" y="17" width="3" height="3"/></g><path d="M5.5 15.5 L10.5 3.5 L15.5 15.5 M7.3 11.3 H13.7" fill="none" stroke="#3d4757" stroke-width="1.5" stroke-linejoin="round" stroke-linecap="round"/></svg>
<span class="t u" style="left:1800.5px;top:147px;font-size:15px;">文本框</span>
<svg style="left:1850.5px;top:153.2px" width="6.5" height="3.6" viewBox="0 0 6.5 3.6"><path d="M0.4 0.3 L3.25 3.3 L6.1 0.3" fill="none" stroke="#1f2329" stroke-width="1.6" stroke-linecap="round" stroke-linejoin="round"/></svg>
<svg style="left:1875px;top:144.5px;" width="21" height="20" viewBox="0 0 21 20"><rect x="1" y="1" width="10" height="9.5" rx="1.5" fill="none" stroke="#3d4757" stroke-width="1.5"/><rect x="9.5" y="9" width="10.5" height="10" rx="1.5" fill="none" stroke="#3d4757" stroke-width="1.5"/><rect x="4.5" y="4.5" width="10.5" height="10.5" rx="1.5" fill="#fff" stroke="#3f66d8" stroke-width="1.5"/></svg>
<span class="t u" style="left:1900.5px;top:147px;font-size:15px;">排列</span>
<svg style="left:1935.5px;top:153.2px" width="6.5" height="3.6" viewBox="0 0 6.5 3.6"><path d="M0.4 0.3 L3.25 3.3 L6.1 0.3" fill="none" stroke="#1f2329" stroke-width="1.6" stroke-linecap="round" stroke-linejoin="round"/></svg>
<svg style="left:1960px;top:144.5px;" width="20" height="20" viewBox="0 0 20 20"><g fill="none" stroke="#b6babf" stroke-width="1.3" stroke-linecap="round" stroke-linejoin="round"><path d="M3 12.5 V1 H16 V12.5 M5.8 12.5 V3.8 H13.2 V12.5"/></g><rect x="0" y="15.5" width="19" height="4" rx="0.8" fill="#c9cccf"/></svg>
<svg style="left:1985.5px;top:153.2px" width="6.5" height="3.6" viewBox="0 0 6.5 3.6"><path d="M0.4 0.3 L3.25 3.3 L6.1 0.3" fill="none" stroke="#b6babf" stroke-width="1.6" stroke-linecap="round" stroke-linejoin="round"/></svg>
<svg style="left:2000px;top:174.5px;" width="7" height="7" viewBox="0 0 7 7"><path d="M0.8 0.8 L6 6 M6 2 V6 H2" fill="none" stroke="#c4c8cb" stroke-width="1.1" stroke-linecap="round" stroke-linejoin="round"/></svg>
<div class="abs" style="left:2010.5px;top:97.5px;width:1px;height:81.5px;background:#d9dcde"></div>
<svg style="left:2035px;top:108.5px;" width="27" height="26" viewBox="0 0 27 26"><g fill="none" stroke="#3d4757" stroke-width="1.6" stroke-linecap="round" stroke-linejoin="round"><circle cx="10" cy="10" r="9"/><path d="M16.5 16.5 L25.5 24.5"/></g></svg>
<span class="t u" style="left:2027px;top:147px;font-size:15px;">查找</span>
<svg style="left:2061px;top:153.2px" width="6.5" height="3.6" viewBox="0 0 6.5 3.6"><path d="M0.4 0.3 L3.25 3.3 L6.1 0.3" fill="none" stroke="#1f2329" stroke-width="1.6" stroke-linecap="round" stroke-linejoin="round"/></svg>
<svg style="left:2085px;top:110.5px;" width="22" height="20" viewBox="0 0 22 20"><g fill="none" stroke="#3d4757" stroke-width="1.5" stroke-linecap="round" stroke-linejoin="round"><path d="M8 1 H2 C1.4 1 1 1.4 1 2 V5 M1 11 V15 C1 15.6 1.4 16 2 16 H9 M13 1 H16 M19.5 1.5 V9"/></g><path d="M12.5 10.5 L20.5 13 L16.8 14.8 L15 18.5 Z" fill="#fff" stroke="#3f66d8" stroke-width="1.4" stroke-linejoin="round"/></svg>
<span class="t u" style="left:2110px;top:112px;font-size:15px;">选择</span>
<svg style="left:2145px;top:118.2px" width="6.5" height="3.6" viewBox="0 0 6.5 3.6"><path d="M0.4 0.3 L3.25 3.3 L6.1 0.3" fill="none" stroke="#1f2329" stroke-width="1.6" stroke-linecap="round" stroke-linejoin="round"/></svg>
<svg style="left:2086px;top:144.5px;" width="21" height="20" viewBox="0 0 21 20"><g fill="none" stroke="#3d4757" stroke-width="1.4" stroke-linecap="round" stroke-linejoin="round"><path d="M4.5 8 C4.5 4 7 1.5 10.5 1.5 M8.5 0 L10.8 1.5 L8.8 3.5"/><path d="M17 12 C17 16 14.5 18.5 11 18.5 M13 20 L10.7 18.5 L12.7 16.5"/><path d="M12.5 9 L15.5 1.5 L18.5 9 M13.5 6.5 H17.5"/><path d="M1 11 H7 M4 10 V11 M2 12.5 C3 15.5 5 17 7 17.5 M6.5 12.5 C5.5 15.5 3.5 17 1 17.5"/></g></svg>
<span class="t u" style="left:2110px;top:147px;font-size:15px;">翻译</span>
<svg style="left:2145px;top:153.2px" width="6.5" height="3.6" viewBox="0 0 6.5 3.6"><path d="M0.4 0.3 L3.25 3.3 L6.1 0.3" fill="none" stroke="#1f2329" stroke-width="1.6" stroke-linecap="round" stroke-linejoin="round"/></svg>
<!-- gen_left.left -->
<div class="abs" style="left:375px;top:185px;width:1px;height:1175px;background:rgba(90,110,110,.22)"></div>
<span class="t u" style="left:138.5px;top:208px;font-size:15px;">大纲</span>
<span class="t u" style="left:183px;top:208px;font-size:15px;color:#c0510f;">幻灯片</span>
<div class="abs" style="left:189.5px;top:228.5px;width:31.5px;height:2px;background:#c0510f;border-radius:1px"></div>
<svg style="left:340.5px;top:208.5px;" width="7" height="13" viewBox="0 0 7 13"><path d="M6.2 0.8 L0.9 6.5 L6.2 12.2" fill="none" stroke="#3d4757" stroke-width="1.5" stroke-linecap="round" stroke-linejoin="round"/></svg>
<div class="abs" style="left:361.5px;top:256px;width:6.5px;height:684px;background:#c4d2cf;border-radius:3.5px"></div>
<div class="abs" style="left:0;top:240px;width:360px;height:1060px;overflow:hidden">
<span class="t" style="left:32.8px;top:23.05px;font-size:16.5px;">1</span>
<div class="abs" style="left:57.3px;top:16px;width:278.7px;height:208.6px;overflow:hidden;box-shadow:0 0 0 0.7px rgba(110,125,120,.22),0 1.5px 3px rgba(90,110,105,.38);background:#fff">
<svg style="left:0;top:0" width="278.5" height="209" viewBox="0 0 278.5 209"><rect width="278.5" height="209" fill="#fefcf3"/><g fill="none" stroke="#9fb5ad" stroke-width="0.7"><path d="M2 40 C12 30 24 22 44 16 M10 38 C14 26 20 16 24 6"/><path d="M96 2 C100 14 100 24 96 36 M96 20 C104 14 112 8 118 4 M96 24 C88 18 82 12 80 6"/><path d="M128 38 C136 28 146 16 160 4 M140 26 C150 26 158 24 166 20"/><path d="M226 30 C238 20 250 12 264 4"/><path d="M236 150 C246 140 256 134 270 130 M244 144 C246 134 250 126 256 120"/><path d="M4 204 C16 196 28 186 40 172 M18 194 C26 192 36 192 46 194 M22 190 C24 182 30 174 36 170"/><path d="M236 206 C244 196 250 186 254 176"/></g><ellipse cx="14" cy="14" rx="10" ry="4" transform="rotate(-55 14 14)" fill="#a9c0b3"/><ellipse cx="24" cy="10" rx="9" ry="3.6" transform="rotate(-75 24 10)" fill="#bed0c4"/><ellipse cx="30" cy="22" rx="10" ry="4" transform="rotate(-20 30 22)" fill="#8fae9f"/><ellipse cx="40" cy="16" rx="9" ry="3.5" transform="rotate(-35 40 16)" fill="#a9c0b3"/><ellipse cx="134" cy="18" rx="11" ry="4.5" transform="rotate(-60 134 18)" fill="#a9c0b3"/><ellipse cx="146" cy="14" rx="10" ry="4" transform="rotate(-40 146 14)" fill="#8fae9f"/><ellipse cx="130" cy="30" rx="9" ry="3.5" transform="rotate(-80 130 30)" fill="#bed0c4"/><ellipse cx="156" cy="26" rx="9" ry="3.5" transform="rotate(-10 156 26)" fill="#bed0c4"/><ellipse cx="120" cy="10" rx="8" ry="3" transform="rotate(-120 120 10)" fill="#bed0c4"/><ellipse cx="236" cy="12" rx="11" ry="4" transform="rotate(-35 236 12)" fill="#bed0c4"/><ellipse cx="250" cy="8" rx="10" ry="3.8" transform="rotate(-20 250 8)" fill="#a9c0b3"/><ellipse cx="262" cy="18" rx="9" ry="3.5" transform="rotate(-60 262 18)" fill="#bed0c4"/><ellipse cx="246" cy="100" rx="13" ry="5.5" transform="rotate(-10 246 100)" fill="#8fae9f"/><ellipse cx="256" cy="114" rx="12" ry="5" transform="rotate(35 256 114)" fill="#a9c0b3"/><ellipse cx="240" cy="116" rx="10" ry="4" transform="rotate(80 240 116)" fill="#bed0c4"/><ellipse cx="266" cy="104" rx="9" ry="4" transform="rotate(-50 266 104)" fill="#bed0c4"/><ellipse cx="10" cy="68" rx="8" ry="3.2" transform="rotate(80 10 68)" fill="#bed0c4"/><ellipse cx="6" cy="84" rx="9" ry="3.5" transform="rotate(70 6 84)" fill="#a9c0b3"/><ellipse cx="8" cy="150" rx="10" ry="4" transform="rotate(75 8 150)" fill="#bed0c4"/><ellipse cx="6" cy="120" rx="7" ry="3" transform="rotate(90 6 120)" fill="#bed0c4"/><ellipse cx="126" cy="178" rx="13" ry="5.5" transform="rotate(-60 126 178)" fill="#8fae9f"/><ellipse cx="140" cy="184" rx="12" ry="5" transform="rotate(-80 140 184)" fill="#a9c0b3"/><ellipse cx="152" cy="192" rx="11" ry="4.5" transform="rotate(-30 152 192)" fill="#bed0c4"/><ellipse cx="118" cy="192" rx="10" ry="4" transform="rotate(-110 118 192)" fill="#bed0c4"/><ellipse cx="268" cy="190" rx="11" ry="4.5" transform="rotate(70 268 190)" fill="#a9c0b3"/><ellipse cx="258" cy="200" rx="9" ry="3.5" transform="rotate(20 258 200)" fill="#bed0c4"/><ellipse cx="274" cy="176" rx="8" ry="3.2" transform="rotate(90 274 176)" fill="#bed0c4"/><ellipse cx="207.1" cy="11.7" rx="13.5" ry="9.4" transform="rotate(29 207.1 11.7)" fill="#f9d68f"/><ellipse cx="190.0" cy="19.8" rx="13.5" ry="9.4" transform="rotate(101 190.0 19.8)" fill="#f9d68f"/><ellipse cx="177.0" cy="6.1" rx="13.5" ry="9.4" transform="rotate(173 177.0 6.1)" fill="#f9d68f"/><ellipse cx="186.1" cy="-10.6" rx="13.5" ry="9.4" transform="rotate(245 186.1 -10.6)" fill="#f9d68f"/><ellipse cx="204.7" cy="-7.1" rx="13.5" ry="9.4" transform="rotate(317 204.7 -7.1)" fill="#f9d68f"/><circle cx="193" cy="4" r="5.2" fill="#efb742"/><ellipse cx="306.0" cy="63.7" rx="23.9" ry="16.6" transform="rotate(11 306.0 63.7)" fill="#f9d488"/><ellipse cx="287.1" cy="85.0" rx="23.9" ry="16.6" transform="rotate(71 287.1 85.0)" fill="#f9d488"/><ellipse cx="259.1" cy="79.4" rx="23.9" ry="16.6" transform="rotate(131 259.1 79.4)" fill="#f9d488"/><ellipse cx="250.0" cy="52.3" rx="23.9" ry="16.6" transform="rotate(191 250.0 52.3)" fill="#f9d488"/><ellipse cx="268.9" cy="31.0" rx="23.9" ry="16.6" transform="rotate(251 268.9 31.0)" fill="#f9d488"/><ellipse cx="296.9" cy="36.6" rx="23.9" ry="16.6" transform="rotate(311 296.9 36.6)" fill="#f9d488"/><circle cx="278" cy="58" r="9.2" fill="#eeb440"/><ellipse cx="27.6" cy="65.6" rx="7.8" ry="5.4" transform="rotate(23 27.6 65.6)" fill="#fce4b0"/><ellipse cx="18.2" cy="71.3" rx="7.8" ry="5.4" transform="rotate(95 18.2 71.3)" fill="#fce4b0"/><ellipse cx="9.9" cy="64.1" rx="7.8" ry="5.4" transform="rotate(167 9.9 64.1)" fill="#fce4b0"/><ellipse cx="14.2" cy="54.0" rx="7.8" ry="5.4" transform="rotate(239 14.2 54.0)" fill="#fce4b0"/><ellipse cx="25.1" cy="55.0" rx="7.8" ry="5.4" transform="rotate(311 25.1 55.0)" fill="#fce4b0"/><circle cx="19" cy="62" r="3.0" fill="#f6cc74"/><ellipse cx="21.5" cy="123.8" rx="8.3" ry="5.8" transform="rotate(63 21.5 123.8)" fill="#fbe0a6"/><ellipse cx="10.0" cy="122.0" rx="8.3" ry="5.8" transform="rotate(135 10.0 122.0)" fill="#fbe0a6"/><ellipse cx="8.2" cy="110.5" rx="8.3" ry="5.8" transform="rotate(207 8.2 110.5)" fill="#fbe0a6"/><ellipse cx="18.6" cy="105.2" rx="8.3" ry="5.8" transform="rotate(279 18.6 105.2)" fill="#fbe0a6"/><ellipse cx="26.8" cy="113.5" rx="8.3" ry="5.8" transform="rotate(351 26.8 113.5)" fill="#fbe0a6"/><circle cx="17" cy="115" r="3.2" fill="#f6cc74"/><ellipse cx="25.9" cy="149.7" rx="7.8" ry="5.4" transform="rotate(17 25.9 149.7)" fill="#fbe0a6"/><ellipse cx="17.1" cy="156.3" rx="7.8" ry="5.4" transform="rotate(89 17.1 156.3)" fill="#fbe0a6"/><ellipse cx="8.2" cy="150.0" rx="7.8" ry="5.4" transform="rotate(161 8.2 150.0)" fill="#fbe0a6"/><ellipse cx="11.4" cy="139.6" rx="7.8" ry="5.4" transform="rotate(233 11.4 139.6)" fill="#fbe0a6"/><ellipse cx="22.4" cy="139.4" rx="7.8" ry="5.4" transform="rotate(305 22.4 139.4)" fill="#fbe0a6"/><circle cx="17" cy="147" r="3.0" fill="#f6cc74"/><ellipse cx="102.4" cy="213.1" rx="14.0" ry="9.7" transform="rotate(52 102.4 213.1)" fill="#f9d68f"/><ellipse cx="82.7" cy="213.9" rx="14.0" ry="9.7" transform="rotate(124 82.7 213.9)" fill="#f9d68f"/><ellipse cx="75.9" cy="195.5" rx="14.0" ry="9.7" transform="rotate(196 75.9 195.5)" fill="#f9d68f"/><ellipse cx="91.3" cy="183.3" rx="14.0" ry="9.7" transform="rotate(268 91.3 183.3)" fill="#f9d68f"/><ellipse cx="107.7" cy="194.2" rx="14.0" ry="9.7" transform="rotate(340 107.7 194.2)" fill="#f9d68f"/><circle cx="92" cy="200" r="5.4" fill="#efb742"/><ellipse cx="246.3" cy="184.1" rx="8.8" ry="6.1" transform="rotate(11 246.3 184.1)" fill="#fce2ab"/><ellipse cx="237.2" cy="192.5" rx="8.8" ry="6.1" transform="rotate(83 237.2 192.5)" fill="#fce2ab"/><ellipse cx="226.4" cy="186.4" rx="8.8" ry="6.1" transform="rotate(155 226.4 186.4)" fill="#fce2ab"/><ellipse cx="228.9" cy="174.2" rx="8.8" ry="6.1" transform="rotate(227 228.9 174.2)" fill="#fce2ab"/><ellipse cx="241.2" cy="172.8" rx="8.8" ry="6.1" transform="rotate(299 241.2 172.8)" fill="#fce2ab"/><circle cx="236" cy="182" r="3.4" fill="#f6cc74"/><ellipse cx="257.5" cy="139.1" rx="4.7" ry="3.2" transform="rotate(11 257.5 139.1)" fill="#fdeac0"/><ellipse cx="252.6" cy="143.5" rx="4.7" ry="3.2" transform="rotate(83 252.6 143.5)" fill="#fdeac0"/><ellipse cx="246.9" cy="140.3" rx="4.7" ry="3.2" transform="rotate(155 246.9 140.3)" fill="#fdeac0"/><ellipse cx="248.2" cy="133.9" rx="4.7" ry="3.2" transform="rotate(227 248.2 133.9)" fill="#fdeac0"/><ellipse cx="254.7" cy="133.1" rx="4.7" ry="3.2" transform="rotate(299 254.7 133.1)" fill="#fdeac0"/><circle cx="252" cy="138" r="1.8" fill="#f8d58a"/><circle cx="76" cy="18" r="1.9" fill="#f3c353"/><circle cx="84" cy="12" r="1.9" fill="#f3c353"/><circle cx="88" cy="24" r="1.9" fill="#f3c353"/><circle cx="94" cy="30" r="1.9" fill="#f3c353"/><circle cx="102" cy="26" r="1.9" fill="#f3c353"/><circle cx="108" cy="18" r="1.9" fill="#f3c353"/><circle cx="114" cy="10" r="1.9" fill="#f3c353"/><circle cx="98" cy="38" r="1.9" fill="#f3c353"/><circle cx="8" cy="188" r="1.9" fill="#f3c353"/><circle cx="14" cy="180" r="1.9" fill="#f3c353"/><circle cx="22" cy="186" r="1.9" fill="#f3c353"/><circle cx="30" cy="178" r="1.9" fill="#f3c353"/><circle cx="40" cy="180" r="1.9" fill="#f3c353"/><circle cx="46" cy="186" r="1.9" fill="#f3c353"/><circle cx="12" cy="198" r="1.9" fill="#f3c353"/><circle cx="26" cy="196" r="1.9" fill="#f3c353"/><circle cx="36" cy="172" r="1.9" fill="#f3c353"/><rect x="17" y="24.5" width="244.5" height="158.5" fill="#fffdf6" fill-opacity="0.45"/><rect x="17" y="24.5" width="244.5" height="158.5" fill="none" stroke="#f3c85f" stroke-width="0.9"/></svg><span class="t" style="left:33.5px;top:56.5px;font-size:18.7px;line-height:22.2px;font-family:'DejaVu Sans','Noto Serif CJK SC',serif;font-weight:700;color:#111;white-space:nowrap"><i style="font-weight:400;font-size:17.6px;letter-spacing:0.15px">springboot</i>个人健康管理网<br>站的设计与实现<i style="font-weight:400;font-size:17.6px">-ppt</i></span><span class="t" style="left:93px;top:123px;font-size:12.3px;font-family:'Liberation Serif','Noto Serif CJK SC',serif;font-weight:900;color:#000">答辩人：xxx</span><span class="t" style="left:92.5px;top:140.5px;font-size:13.5px;font-family:'Liberation Serif','Noto Serif CJK SC',serif;font-weight:900;color:#000">指导老师：xxx</span><span class="t" style="left:143px;top:198.8px;font-size:4.4px;color:#9a9a90;letter-spacing:0.05px">注：文本框可根据需求改变颜色、移动位置；文字可编辑</span>
</div>
<span class="t" style="left:32.8px;top:252.85px;font-size:16.5px;">2</span>
<div class="abs" style="left:57.3px;top:245.8px;width:278.7px;height:208.6px;overflow:hidden;box-shadow:0 0 0 0.7px rgba(110,125,120,.22),0 1.5px 3px rgba(90,110,105,.38);background:#fff">
<svg style="left:0;top:0" width="278.5" height="209" viewBox="0 0 278.5 209"><rect width="278.5" height="209" fill="#fff"/><rect x="115.5" y="42" width="70" height="12" rx="6" fill="#f9d99a"/><circle cx="99" cy="48" r="8.2" fill="#fff" stroke="#b9cbb0" stroke-width="2.6" stroke-dasharray="3 1.6"/><circle cx="99" cy="48" r="6" fill="#fff" stroke="#dfe8da" stroke-width="0.6"/><rect x="115.5" y="71.7" width="70" height="12" rx="6" fill="#f9d99a"/><circle cx="99" cy="77.7" r="8.2" fill="#fff" stroke="#b9cbb0" stroke-width="2.6" stroke-dasharray="3 1.6"/><circle cx="99" cy="77.7" r="6" fill="#fff" stroke="#dfe8da" stroke-width="0.6"/><rect x="115.5" y="100.4" width="72" height="12" rx="6" fill="#f9d99a"/><circle cx="99" cy="106.4" r="8.2" fill="#fff" stroke="#b9cbb0" stroke-width="2.6" stroke-dasharray="3 1.6"/><circle cx="99" cy="106.4" r="6" fill="#fff" stroke="#dfe8da" stroke-width="0.6"/><rect x="115.5" y="128" width="70" height="12" rx="6" fill="#f9d99a"/><circle cx="99" cy="134" r="8.2" fill="#fff" stroke="#b9cbb0" stroke-width="2.6" stroke-dasharray="3 1.6"/><circle cx="99" cy="134" r="6" fill="#fff" stroke="#dfe8da" stroke-width="0.6"/></svg><span class="t" style="left:19px;top:16.6px;font-size:10.6px;color:#111;font-weight:700">目录</span><span class="t" style="left:96.5px;top:44.4px;font-size:7px;color:#8d9a90">1</span><span class="t" style="left:121px;top:44.2px;font-size:7.5px;color:#66624e;letter-spacing:-0.3px">一、绪  论</span><span class="t" style="left:96.5px;top:74.10000000000001px;font-size:7px;color:#8d9a90">2</span><span class="t" style="left:121px;top:73.9px;font-size:7.5px;color:#66624e;letter-spacing:-0.3px">二、系统相关技术概述</span><span class="t" style="left:96.5px;top:102.80000000000001px;font-size:7px;color:#8d9a90">3</span><span class="t" style="left:121px;top:102.60000000000001px;font-size:7.5px;color:#66624e;letter-spacing:-0.3px">三、 个人健康管理网站的设计</span><span class="t" style="left:96.5px;top:130.4px;font-size:7px;color:#8d9a90">4</span><span class="t" style="left:121px;top:130.2px;font-size:7.5px;color:#66624e;letter-spacing:-0.3px">四、功能结构</span>
</div>
<span class="t" style="left:32.8px;top:482.35px;font-size:16.5px;">3</span>
<div class="abs" style="left:57.3px;top:475.3px;width:278.7px;height:208.6px;overflow:hidden;box-shadow:0 0 0 0.7px rgba(110,125,120,.22),0 1.5px 3px rgba(90,110,105,.38);background:#fff">
<svg style="left:0;top:0" width="278.5" height="209" viewBox="0 0 278.5 209"><rect width="278.5" height="209" fill="#c4d6ce"/><defs><clipPath id="c3"><rect x="198" y="9.2" width="76.8" height="189.3"/></clipPath></defs><g clip-path="url(#c3)"><g transform="translate(198,9.2)"><rect x="0" y="-44.9" width="44" height="56" fill="#d3dfd7"/><rect x="44" y="-44.9" width="34" height="56" fill="#fbf9f6"/><path d="M62 -44.9 V11.100000000000001 M71 -44.9 V11.100000000000001 M57 -32.9 H78 M57 -0.8999999999999986 H78" stroke="#a9776a" stroke-width="1" fill="none"/><ellipse cx="14" cy="-36.9" rx="12" ry="2.3" transform="rotate(25 14 -36.9)" fill="#3f7c63"/><ellipse cx="20" cy="-30.9" rx="13" ry="2.3" transform="rotate(35 20 -30.9)" fill="#3f7c63"/><ellipse cx="24" cy="-22.9" rx="13" ry="2.3" transform="rotate(50 24 -22.9)" fill="#3f7c63"/><ellipse cx="27" cy="-14.899999999999999" rx="12" ry="2.3" transform="rotate(65 27 -14.899999999999999)" fill="#3f7c63"/><ellipse cx="30" cy="-6.899999999999999" rx="11" ry="2.3" transform="rotate(80 30 -6.899999999999999)" fill="#3f7c63"/><ellipse cx="10" cy="-28.9" rx="10" ry="2.3" transform="rotate(10 10 -28.9)" fill="#3f7c63"/><ellipse cx="16" cy="-18.9" rx="11" ry="2.3" transform="rotate(20 16 -18.9)" fill="#3f7c63"/><ellipse cx="20" cy="-8.899999999999999" rx="10" ry="2.3" transform="rotate(35 20 -8.899999999999999)" fill="#3f7c63"/><ellipse cx="33" cy="-32.9" rx="9" ry="2.3" transform="rotate(-60 33 -32.9)" fill="#3f7c63"/><ellipse cx="36" cy="-0.8999999999999986" rx="9" ry="2.3" transform="rotate(100 36 -0.8999999999999986)" fill="#3f7c63"/><path d="M2 -42.9 L8 -34.9" stroke="#3d5fa8" stroke-width="1.2"/><path d="M36 -34.9 C36 -42.9 42 -45.9 48 -44.9 C56 -43.9 58 -36.9 58 -28.9 C59 -20.9 61 -16.9 60 -10.899999999999999 L54 -18.9 L40 -22.9 Z" fill="#1f1d24"/><ellipse cx="44.5" cy="-31.9" rx="6.2" ry="7.2" fill="#f7dcc8"/><path d="M38 -35.9 C41 -39.9 47 -40.9 52 -36.9 L52 -40.9 L40 -41.9 Z" fill="#1f1d24"/><path d="M40 11.100000000000001 V-14.899999999999999 C42 -20.9 46 -22.9 50 -21.9 C56 -20.9 59 -14.899999999999999 59 -6.899999999999999 V11.100000000000001 Z" fill="#f3d158"/><path d="M44 -21.9 L47 -14.899999999999999 L50 -21.9 Z" fill="#fff"/><ellipse cx="59.5" cy="-12.899999999999999" rx="4" ry="6" fill="#fdfdfd"/><ellipse cx="7" cy="-14.899999999999999" rx="8" ry="6.5" fill="#1f1d24"/><ellipse cx="8" cy="-10.899999999999999" rx="5" ry="3.5" fill="#f3cdb3"/><path d="M0 -6.899999999999999 L12 -3.8999999999999986 L24 -8.899999999999999 L26 5.100000000000001 L14 11.100000000000001 L0 11.100000000000001 Z" fill="#a5454e"/><path d="M12 -3.8999999999999986 L13 10.100000000000001" stroke="#e8c9c4" stroke-width="0.8"/><ellipse cx="26" cy="7.100000000000001" rx="4" ry="3" fill="#f3cdb3"/><rect x="0" y="11.1" width="44" height="56" fill="#d3dfd7"/><rect x="44" y="11.1" width="34" height="56" fill="#fbf9f6"/><path d="M62 11.1 V67.1 M71 11.1 V67.1 M57 23.1 H78 M57 55.1 H78" stroke="#a9776a" stroke-width="1" fill="none"/><ellipse cx="14" cy="19.1" rx="12" ry="2.3" transform="rotate(25 14 19.1)" fill="#3f7c63"/><ellipse cx="20" cy="25.1" rx="13" ry="2.3" transform="rotate(35 20 25.1)" fill="#3f7c63"/><ellipse cx="24" cy="33.1" rx="13" ry="2.3" transform="rotate(50 24 33.1)" fill="#3f7c63"/><ellipse cx="27" cy="41.1" rx="12" ry="2.3" transform="rotate(65 27 41.1)" fill="#3f7c63"/><ellipse cx="30" cy="49.1" rx="11" ry="2.3" transform="rotate(80 30 49.1)" fill="#3f7c63"/><ellipse cx="10" cy="27.1" rx="10" ry="2.3" transform="rotate(10 10 27.1)" fill="#3f7c63"/><ellipse cx="16" cy="37.1" rx="11" ry="2.3" transform="rotate(20 16 37.1)" fill="#3f7c63"/><ellipse cx="20" cy="47.1" rx="10" ry="2.3" transform="rotate(35 20 47.1)" fill="#3f7c63"/><ellipse cx="33" cy="23.1" rx="9" ry="2.3" transform="rotate(-60 33 23.1)" fill="#3f7c63"/><ellipse cx="36" cy="55.1" rx="9" ry="2.3" transform="rotate(100 36 55.1)" fill="#3f7c63"/><path d="M2 13.1 L8 21.1" stroke="#3d5fa8" stroke-width="1.2"/><path d="M36 21.1 C36 13.1 42 10.1 48 11.1 C56 12.1 58 19.1 58 27.1 C59 35.1 61 39.1 60 45.1 L54 37.1 L40 33.1 Z" fill="#1f1d24"/><ellipse cx="44.5" cy="24.1" rx="6.2" ry="7.2" fill="#f7dcc8"/><path d="M38 20.1 C41 16.1 47 15.1 52 19.1 L52 15.1 L40 14.1 Z" fill="#1f1d24"/><path d="M40 67.1 V41.1 C42 35.1 46 33.1 50 34.1 C56 35.1 59 41.1 59 49.1 V67.1 Z" fill="#f3d158"/><path d="M44 34.1 L47 41.1 L50 34.1 Z" fill="#fff"/><ellipse cx="59.5" cy="43.1" rx="4" ry="6" fill="#fdfdfd"/><ellipse cx="7" cy="41.1" rx="8" ry="6.5" fill="#1f1d24"/><ellipse cx="8" cy="45.1" rx="5" ry="3.5" fill="#f3cdb3"/><path d="M0 49.1 L12 52.1 L24 47.1 L26 61.1 L14 67.1 L0 67.1 Z" fill="#a5454e"/><path d="M12 52.1 L13 66.1" stroke="#e8c9c4" stroke-width="0.8"/><ellipse cx="26" cy="63.1" rx="4" ry="3" fill="#f3cdb3"/><rect x="0" y="67.1" width="44" height="56" fill="#d3dfd7"/><rect x="44" y="67.1" width="34" height="56" fill="#fbf9f6"/><path d="M62 67.1 V123.1 M71 67.1 V123.1 M57 79.1 H78 M57 111.1 H78" stroke="#a9776a" stroke-width="1" fill="none"/><ellipse cx="14" cy="75.1" rx="12" ry="2.3" transform="rotate(25 14 75.1)" fill="#3f7c63"/><ellipse cx="20" cy="81.1" rx="13" ry="2.3" transform="rotate(35 20 81.1)" fill="#3f7c63"/><ellipse cx="24" cy="89.1" rx="13" ry="2.3" transform="rotate(50 24 89.1)" fill="#3f7c63"/><ellipse cx="27" cy="97.1" rx="12" ry="2.3" transform="rotate(65 27 97.1)" fill="#3f7c63"/><ellipse cx="30" cy="105.1" rx="11" ry="2.3" transform="rotate(80 30 105.1)" fill="#3f7c63"/><ellipse cx="10" cy="83.1" rx="10" ry="2.3" transform="rotate(10 10 83.1)" fill="#3f7c63"/><ellipse cx="16" cy="93.1" rx="11" ry="2.3" transform="rotate(20 16 93.1)" fill="#3f7c63"/><ellipse cx="20" cy="103.1" rx="10" ry="2.3" transform="rotate(35 20 103.1)" fill="#3f7c63"/><ellipse cx="33" cy="79.1" rx="9" ry="2.3" transform="rotate(-60 33 79.1)" fill="#3f7c63"/><ellipse cx="36" cy="111.1" rx="9" ry="2.3" transform="rotate(100 36 111.1)" fill="#3f7c63"/><path d="M2 69.1 L8 77.1" stroke="#3d5fa8" stroke-width="1.2"/><path d="M36 77.1 C36 69.1 42 66.1 48 67.1 C56 68.1 58 75.1 58 83.1 C59 91.1 61 95.1 60 101.1 L54 93.1 L40 89.1 Z" fill="#1f1d24"/><ellipse cx="44.5" cy="80.1" rx="6.2" ry="7.2" fill="#f7dcc8"/><path d="M38 76.1 C41 72.1 47 71.1 52 75.1 L52 71.1 L40 70.1 Z" fill="#1f1d24"/><path d="M40 123.1 V97.1 C42 91.1 46 89.1 50 90.1 C56 91.1 59 97.1 59 105.1 V123.1 Z" fill="#f3d158"/><path d="M44 90.1 L47 97.1 L50 90.1 Z" fill="#fff"/><ellipse cx="59.5" cy="99.1" rx="4" ry="6" fill="#fdfdfd"/><ellipse cx="7" cy="97.1" rx="8" ry="6.5" fill="#1f1d24"/><ellipse cx="8" cy="101.1" rx="5" ry="3.5" fill="#f3cdb3"/><path d="M0 105.1 L12 108.1 L24 103.1 L26 117.1 L14 123.1 L0 123.1 Z" fill="#a5454e"/><path d="M12 108.1 L13 122.1" stroke="#e8c9c4" stroke-width="0.8"/><ellipse cx="26" cy="119.1" rx="4" ry="3" fill="#f3cdb3"/><rect x="0" y="123.1" width="44" height="56" fill="#d3dfd7"/><rect x="44" y="123.1" width="34" height="56" fill="#fbf9f6"/><path d="M62 123.1 V179.1 M71 123.1 V179.1 M57 135.1 H78 M57 167.1 H78" stroke="#a9776a" stroke-width="1" fill="none"/><ellipse cx="14" cy="131.1" rx="12" ry="2.3" transform="rotate(25 14 131.1)" fill="#3f7c63"/><ellipse cx="20" cy="137.1" rx="13" ry="2.3" transform="rotate(35 20 137.1)" fill="#3f7c63"/><ellipse cx="24" cy="145.1" rx="13" ry="2.3" transform="rotate(50 24 145.1)" fill="#3f7c63"/><ellipse cx="27" cy="153.1" rx="12" ry="2.3" transform="rotate(65 27 153.1)" fill="#3f7c63"/><ellipse cx="30" cy="161.1" rx="11" ry="2.3" transform="rotate(80 30 161.1)" fill="#3f7c63"/><ellipse cx="10" cy="139.1" rx="10" ry="2.3" transform="rotate(10 10 139.1)" fill="#3f7c63"/><ellipse cx="16" cy="149.1" rx="11" ry="2.3" transform="rotate(20 16 149.1)" fill="#3f7c63"/><ellipse cx="20" cy="159.1" rx="10" ry="2.3" transform="rotate(35 20 159.1)" fill="#3f7c63"/><ellipse cx="33" cy="135.1" rx="9" ry="2.3" transform="rotate(-60 33 135.1)" fill="#3f7c63"/><ellipse cx="36" cy="167.1" rx="9" ry="2.3" transform="rotate(100 36 167.1)" fill="#3f7c63"/><path d="M2 125.1 L8 133.1" stroke="#3d5fa8" stroke-width="1.2"/><path d="M36 133.1 C36 125.1 42 122.1 48 123.1 C56 124.1 58 131.1 58 139.1 C59 147.1 61 151.1 60 157.1 L54 149.1 L40 145.1 Z" fill="#1f1d24"/><ellipse cx="44.5" cy="136.1" rx="6.2" ry="7.2" fill="#f7dcc8"/><path d="M38 132.1 C41 128.1 47 127.1 52 131.1 L52 127.1 L40 126.1 Z" fill="#1f1d24"/><path d="M40 179.1 V153.1 C42 147.1 46 145.1 50 146.1 C56 147.1 59 153.1 59 161.1 V179.1 Z" fill="#f3d158"/><path d="M44 146.1 L47 153.1 L50 146.1 Z" fill="#fff"/><ellipse cx="59.5" cy="155.1" rx="4" ry="6" fill="#fdfdfd"/><ellipse cx="7" cy="153.1" rx="8" ry="6.5" fill="#1f1d24"/><ellipse cx="8" cy="157.1" rx="5" ry="3.5" fill="#f3cdb3"/><path d="M0 161.1 L12 164.1 L24 159.1 L26 173.1 L14 179.1 L0 179.1 Z" fill="#a5454e"/><path d="M12 164.1 L13 178.1" stroke="#e8c9c4" stroke-width="0.8"/><ellipse cx="26" cy="175.1" rx="4" ry="3" fill="#f3cdb3"/><rect x="0" y="179.1" width="44" height="56" fill="#d3dfd7"/><rect x="44" y="179.1" width="34" height="56" fill="#fbf9f6"/><path d="M62 179.1 V235.1 M71 179.1 V235.1 M57 191.1 H78 M57 223.1 H78" stroke="#a9776a" stroke-width="1" fill="none"/><ellipse cx="14" cy="187.1" rx="12" ry="2.3" transform="rotate(25 14 187.1)" fill="#3f7c63"/><ellipse cx="20" cy="193.1" rx="13" ry="2.3" transform="rotate(35 20 193.1)" fill="#3f7c63"/><ellipse cx="24" cy="201.1" rx="13" ry="2.3" transform="rotate(50 24 201.1)" fill="#3f7c63"/><ellipse cx="27" cy="209.1" rx="12" ry="2.3" transform="rotate(65 27 209.1)" fill="#3f7c63"/><ellipse cx="30" cy="217.1" rx="11" ry="2.3" transform="rotate(80 30 217.1)" fill="#3f7c63"/><ellipse cx="10" cy="195.1" rx="10" ry="2.3" transform="rotate(10 10 195.1)" fill="#3f7c63"/><ellipse cx="16" cy="205.1" rx="11" ry="2.3" transform="rotate(20 16 205.1)" fill="#3f7c63"/><ellipse cx="20" cy="215.1" rx="10" ry="2.3" transform="rotate(35 20 215.1)" fill="#3f7c63"/><ellipse cx="33" cy="191.1" rx="9" ry="2.3" transform="rotate(-60 33 191.1)" fill="#3f7c63"/><ellipse cx="36" cy="223.1" rx="9" ry="2.3" transform="rotate(100 36 223.1)" fill="#3f7c63"/><path d="M2 181.1 L8 189.1" stroke="#3d5fa8" stroke-width="1.2"/><path d="M36 189.1 C36 181.1 42 178.1 48 179.1 C56 180.1 58 187.1 58 195.1 C59 203.1 61 207.1 60 213.1 L54 205.1 L40 201.1 Z" fill="#1f1d24"/><ellipse cx="44.5" cy="192.1" rx="6.2" ry="7.2" fill="#f7dcc8"/><path d="M38 188.1 C41 184.1 47 183.1 52 187.1 L52 183.1 L40 182.1 Z" fill="#1f1d24"/><path d="M40 235.1 V209.1 C42 203.1 46 201.1 50 202.1 C56 203.1 59 209.1 59 217.1 V235.1 Z" fill="#f3d158"/><path d="M44 202.1 L47 209.1 L50 202.1 Z" fill="#fff"/><ellipse cx="59.5" cy="211.1" rx="4" ry="6" fill="#fdfdfd"/><ellipse cx="7" cy="209.1" rx="8" ry="6.5" fill="#1f1d24"/><ellipse cx="8" cy="213.1" rx="5" ry="3.5" fill="#f3cdb3"/><path d="M0 217.1 L12 220.1 L24 215.1 L26 229.1 L14 235.1 L0 235.1 Z" fill="#a5454e"/><path d="M12 220.1 L13 234.1" stroke="#e8c9c4" stroke-width="0.8"/><ellipse cx="26" cy="231.1" rx="4" ry="3" fill="#f3cdb3"/></g></g></svg><span class="t" style="left:80px;top:9.2px;font-size:13.6px;font-weight:900;color:#f9c57c;text-shadow:0 0 1px #f59a23,0.5px 1px 1px rgba(90,90,80,.5);letter-spacing:-0.3px">研究背景</span><span class="t" style="left:8px;top:50.60px;font-size:8.7px;font-family:'Liberation Sans','Noto Sans CJK SC',sans-serif;font-weight:500;color:#111;letter-spacing:0.33px">　近年来，人们的生活方式以网络为主题不</span><span class="t" style="left:8px;top:61.80px;font-size:8.7px;font-family:'Liberation Sans','Noto Sans CJK SC',sans-serif;font-weight:500;color:#111;letter-spacing:0.33px">断进化，个人健康管理就是其中的一部分。</span><span class="t" style="left:8px;top:73.00px;font-size:8.7px;font-family:'Liberation Sans','Noto Sans CJK SC',sans-serif;font-weight:500;color:#111;letter-spacing:0.33px">现在，无论是大型的还是小型的网站，都随</span><span class="t" style="left:8px;top:84.20px;font-size:8.7px;font-family:'Liberation Sans','Noto Sans CJK SC',sans-serif;font-weight:500;color:#111;letter-spacing:0.33px">处可见，不知不觉中已经成为我们生活中不</span><span class="t" style="left:8px;top:95.40px;font-size:8.7px;font-family:'Liberation Sans','Noto Sans CJK SC',sans-serif;font-weight:500;color:#111;letter-spacing:0.33px">可或缺的存在。随着社会的发展，除了对系</span><span class="t" style="left:8px;top:106.60px;font-size:8.7px;font-family:'Liberation Sans','Noto Sans CJK SC',sans-serif;font-weight:500;color:#111;letter-spacing:0.33px">统的需求外，我们还要促进经济发展，提高</span><span class="t" style="left:8px;top:117.80px;font-size:8.7px;font-family:'Liberation Sans','Noto Sans CJK SC',sans-serif;font-weight:500;color:#111;letter-spacing:0.33px">工作效率，同时还要做好对健康知识、疫情</span><span class="t" style="left:8px;top:129.00px;font-size:8.7px;font-family:'Liberation Sans','Noto Sans CJK SC',sans-serif;font-weight:500;color:#111;letter-spacing:0.33px">资讯等管理。网络广泛化的运用使信息技术</span><span class="t" style="left:8px;top:140.20px;font-size:8.7px;font-family:'Liberation Sans','Noto Sans CJK SC',sans-serif;font-weight:500;color:#111;letter-spacing:0.33px">快速发展。在保证高效率的基础上，要保证</span><span class="t" style="left:8px;top:151.40px;font-size:8.7px;font-family:'Liberation Sans','Noto Sans CJK SC',sans-serif;font-weight:500;color:#111;letter-spacing:0.33px">用户便捷在线查看健康知识、疫情资讯等</span><span class="t" style="left:8px;top:162.60px;font-size:8.7px;font-family:'Liberation Sans','Noto Sans CJK SC',sans-serif;font-weight:500;color:#111;letter-spacing:0.33px">[1]。</span>
</div>
<span class="t" style="left:32.8px;top:711.55px;font-size:16.5px;color:#c0510f;">4</span>
<div class="abs" style="left:55px;top:702px;width:283px;height:213px;border:2px solid #c1632c;border-radius:4.5px;background:#fff"></div>
<div class="abs" style="left:58.8px;top:705.8px;width:275.6px;height:205.2px;overflow:hidden;background:#d3dcd7">
<div class="abs" style="left:0;top:0;width:1389px;height:1042px;transform:scale(0.19842);transform-origin:0 0;background:#d3dcd7"><svg class="sl th" style="left:0;top:0" width="1389" height="1042" viewBox="0 0 1389 1042">
<defs><pattern id="t4zz" width="7" height="4.5" patternUnits="userSpaceOnUse"><rect width="7" height="4.5" fill="#fffbe9"/><path d="M-0.5 3.6 L1.75 1.2 L3.5 3.6 L5.25 1.2 L7.5 3.6" stroke="#f2b45e" stroke-width="0.85" fill="none"/></pattern><linearGradient id="t4ts" x1="0" y1="0" x2="0" y2="1"><stop offset="0" stop-color="#fbe0b4"/><stop offset="0.45" stop-color="#fbc676"/><stop offset="1" stop-color="#fb9f1c"/></linearGradient><filter id="t4sh" x="-5%" y="-20%" width="110%" height="150%"><feDropShadow dx="2.5" dy="3.5" stdDeviation="2.4" flood-color="#58655f" flood-opacity="0.5"/></filter></defs>
<g filter="url(#t4sh)"><text class="ttl" y="94.0" fill="url(#t4zz)" stroke="url(#t4ts)" stroke-width="3.4" stroke-linejoin="round"><tspan class="tl" x="291.0" textLength="506" lengthAdjust="spacingAndGlyphs">SpringBoot</tspan><tspan class="tc" x="799.5" dy="0">框架介绍</tspan></text></g>
<g class="bd">
<text y="288.40"><tspan x="82.8" y="288.40">现如今后台开源框架主流的有</tspan><tspan class="la" x="685.7" dy="-0.3" textLength="67.6" lengthAdjust="spacingAndGlyphs">SSH</tspan><tspan x="755.6" y="288.40">、</tspan><tspan class="la" x="801.7" dy="-0.3" textLength="67.6" lengthAdjust="spacingAndGlyphs">SSM</tspan><tspan x="871.6" y="288.40">、</tspan><tspan class="la" x="917.7" dy="-0.3" textLength="230.0" lengthAdjust="spacing">SpringBoot</tspan><tspan x="1150.0" y="288.40">，但是</tspan></text>
<text y="344.02"><tspan class="la" x="42.0" dy="-0.3" textLength="67.6" lengthAdjust="spacingAndGlyphs">SSH</tspan><tspan x="111.9" y="344.02">、</tspan><tspan class="la" x="158.0" dy="-0.3" textLength="67.6" lengthAdjust="spacingAndGlyphs">SSM</tspan><tspan x="227.9" y="344.02">框架的环境配置项较多，而</tspan><tspan class="la" x="784.4" dy="-0.3" textLength="230.0" lengthAdjust="spacing">SpringBoot</tspan><tspan x="1016.7" y="344.02">主要的设计思</tspan></text>
<text y="399.64"><tspan x="42.3" y="399.64">想就是约定大于配置，故而</tspan><tspan class="la" x="598.8" dy="-0.3" textLength="206.8" lengthAdjust="spacing">SpingBoot</tspan><tspan x="807.9" y="399.64">在设计时几乎达到零配置</tspan></text>
<text y="455.26"><tspan x="42.3" y="455.26">。</tspan><tspan class="la" x="88.4" dy="-0.3" textLength="230.0" lengthAdjust="spacing">SpringBoot</tspan><tspan x="320.7" y="455.26">整合了业界上的开源框架。具体采用技术框架描</tspan></text>
<text y="510.88"><tspan x="42.3" y="510.88">述如下：</tspan></text>
<text y="566.50"><tspan x="42.3" y="566.50">（</tspan><tspan class="la" x="88.4" dy="-0.3" textLength="21.2" lengthAdjust="spacingAndGlyphs">1</tspan><tspan x="111.9" y="566.50">）</tspan><tspan class="la" x="158.0" dy="-0.3" textLength="160.4" lengthAdjust="spacing">Mybatis</tspan><tspan x="320.7" y="566.50">：</tspan><tspan class="la" x="366.8" dy="-0.3" textLength="160.4" lengthAdjust="spacing">Mybatis</tspan><tspan x="529.5" y="566.50">：提供自动映射，动态</tspan><tspan class="la" x="993.2" dy="-0.3" textLength="67.6" lengthAdjust="spacingAndGlyphs">SQL</tspan><tspan x="1063.1" y="566.50">，级联，缓</tspan></text>
<text y="622.12"><tspan x="42.3" y="622.12">存，注解，代码和</tspan><tspan class="la" x="413.2" dy="-0.3" textLength="67.6" lengthAdjust="spacingAndGlyphs">SQL</tspan><tspan x="483.1" y="622.12">分离等特性，使用方便，同时也对</tspan><tspan class="la" x="1178.8" dy="-0.3" textLength="67.6" lengthAdjust="spacingAndGlyphs">SQL</tspan><tspan x="1248.7" y="622.12">进</tspan></text>
<text y="677.74"><tspan x="42.3" y="677.74">行优化。</tspan></text>
<text y="733.36"><tspan x="42.3" y="733.36">（</tspan><tspan class="la" x="88.4" dy="-0.3" textLength="21.2" lengthAdjust="spacingAndGlyphs">2</tspan><tspan x="111.9" y="733.36">）</tspan><tspan class="la" x="158.0" dy="-0.3" textLength="206.8" lengthAdjust="spacingAndGlyphs">SpringMVC</tspan><tspan x="367.1" y="733.36">：通过一套</tspan><tspan class="la" x="598.8" dy="-0.3" textLength="67.6" lengthAdjust="spacingAndGlyphs">MVC</tspan><tspan x="668.7" y="733.36">注解，让</tspan><tspan class="la" x="854.0" dy="-0.3" textLength="90.8" lengthAdjust="spacingAndGlyphs">POJO</tspan><tspan x="947.1" y="733.36">成为处理请求的控</tspan></text>
<text y="788.98"><tspan x="42.3" y="788.98">制器，无需实现任何接口，同时，</tspan><tspan class="la" x="738.0" dy="-0.3" textLength="206.8" lengthAdjust="spacingAndGlyphs">SpringMVC</tspan><tspan x="947.1" y="788.98">还支持</tspan><tspan class="la" x="1086.0" dy="-0.3" textLength="90.8" lengthAdjust="spacingAndGlyphs">REST</tspan><tspan x="1179.1" y="788.98">风格的</tspan></text>
<text y="844.60"><tspan class="la" x="42.0" dy="-0.3" textLength="67.6" lengthAdjust="spacingAndGlyphs">URL</tspan><tspan x="111.9" y="844.60">请求。</tspan></text>
<text y="900.22"><tspan x="42.3" y="900.22">（</tspan><tspan class="la" x="88.4" dy="-0.3" textLength="21.2" lengthAdjust="spacingAndGlyphs">3</tspan><tspan x="111.9" y="900.22">）</tspan><tspan class="la" x="158.0" dy="-0.3" textLength="230.0" lengthAdjust="spacing">SpringBoot</tspan><tspan x="390.3" y="900.22">：从本质上来说，</tspan><tspan class="la" x="761.2" dy="-0.3" textLength="253.2" lengthAdjust="spacing">Spring Boot</tspan><tspan x="1016.7" y="900.22">就是</tspan><tspan class="la" x="1109.2" dy="-0.3" textLength="160.4" lengthAdjust="spacing">Spring,</tspan><tspan x="1271.9" y="900.22">它</tspan></text>
<text y="955.84"><tspan x="42.3" y="955.84">做了那些没有它你也会去做的</tspan><tspan class="la" x="645.2" dy="-0.3" textLength="253.2" lengthAdjust="spacing">Spring Bean</tspan><tspan x="900.7" y="955.84">配置。</tspan></text>
</g></svg></div>
</div>
<span class="t" style="left:32.8px;top:939.85px;font-size:16.5px;">5</span>
<div class="abs" style="left:57.3px;top:932.8px;width:278.7px;height:208.6px;overflow:hidden;box-shadow:0 0 0 0.7px rgba(110,125,120,.22),0 1.5px 3px rgba(90,110,105,.38);background:#fff">
<svg style="left:0;top:0" width="278.5" height="209" viewBox="0 0 278.5 209"><rect width="278.5" height="209" fill="#fff"/><path d="M2 103 H276" stroke="#c9c9c9" stroke-width="0.8"/><rect x="9" y="104" width="268" height="30" rx="5" fill="none" stroke="#cfcfcf" stroke-width="0.8"/><circle cx="37" cy="103" r="2" fill="#fff" stroke="#9fc3b5" stroke-width="0.8"/><circle cx="100" cy="103" r="2" fill="#fff" stroke="#e9c06a" stroke-width="0.8"/><circle cx="178" cy="103" r="2" fill="#fff" stroke="#9fc3b5" stroke-width="0.8"/><circle cx="248" cy="103" r="2" fill="#fff" stroke="#e9c06a" stroke-width="0.8"/><circle cx="37" cy="86" r="11" fill="none" stroke="#b8d3c8" stroke-width="1.6"/><ellipse cx="37" cy="85.5" rx="5.5" ry="4" fill="none" stroke="#9fc3b5" stroke-width="1.2"/><path d="M33.5 84.5 H40.5 M33.5 86.5 H40.5" stroke="#9fc3b5" stroke-width="0.7"/><circle cx="178" cy="86" r="11" fill="none" stroke="#b8d3c8" stroke-width="1.6" stroke-opacity=".6"/></svg><span class="t" style="left:37.3px;top:34.4px;font-size:27.2px;letter-spacing:0.4px;font-family:'Liberation Serif','Noto Serif CJK SC',serif;font-weight:700;color:#fde3b4;text-shadow:0 0 1px #f59a23,0 0.8px 0.8px #f5a030,0.5px 1.5px 1.5px rgba(90,90,80,.35)">个人健康管理网</span><span class="t" style="left:76px;top:68.6px;font-size:26.6px;letter-spacing:0.2px;font-family:'Liberation Serif','Noto Serif CJK SC',serif;font-weight:700;color:#fde3b4;text-shadow:0 0 1px #f59a23,0 0.8px 0.8px #f5a030,0.5px 1.5px 1.5px rgba(90,90,80,.35)">站的设计</span><span class="t" style="left:25px;top:105.6px;font-family:'Liberation Serif','Noto Serif CJK SC',serif;font-size:6.9px;color:#555;letter-spacing:0">健康知识、疫情资讯是个人健康管理网站的重要组成部分，信息清晰、详细、</span><span class="t" style="left:13px;top:114.2px;font-family:'Liberation Serif','Noto Serif CJK SC',serif;font-size:6.9px;color:#555;letter-spacing:0">准确，能够有效地促进个人健康管理网站的运行[5]。基础设定函数是对整个系统</span><span class="t" style="left:13px;top:122.4px;font-family:'Liberation Serif','Noto Serif CJK SC',serif;font-size:6.9px;color:#555;letter-spacing:0;color:#8a8a8a">的总体布局进行合理安排，包括：健康知识、疫情资讯等，通过对各类资料进行</span>
</div>
</div>
<svg style="left:178.5px;top:1316px;" width="19" height="19" viewBox="0 0 19 19"><path d="M9.5 1 V18 M1 9.5 H18" stroke="#1f2329" stroke-width="1.8" stroke-linecap="round"/></svg>
<!-- gen_slide.slide -->
<style>.sl .ttl{font-size:95.5px;font-weight:700}.sl .tl{font-family:"Liberation Sans",sans-serif}.sl .tc{font-family:"Liberation Serif","Noto Serif CJK SC",serif;font-weight:700;font-size:91.5px}.sl .bd{font-family:"Liberation Serif","Noto Serif CJK SC",serif;font-size:43.8px;letter-spacing:2.6px;fill:#000;font-weight:300}.sl .la{font-family:"Liberation Serif",serif;font-size:46px;letter-spacing:0;font-weight:400;stroke:#d3dcd7;stroke-width:0.7px}.sl.th .bd{font-weight:700;font-family:"Liberation Sans","Noto Sans CJK SC",sans-serif}.sl.th .la{stroke:none;font-weight:700;font-family:"Liberation Sans",sans-serif;font-size:46px}</style>
<div class="abs" style="left:537.5px;top:186.5px;width:34px;height:34px;background:#fff;border-radius:6px;box-shadow:0 0 2px rgba(120,150,150,.35)"></div>
<svg style="left:544.5px;top:195px;" width="20" height="17" viewBox="0 0 20 17"><path d="M7.5 1 H13 L6 16 H0.5 Z" fill="url(#ai1)"/><path d="M10.5 8 H14.5 L19 16 H13.5 Z" fill="url(#ai2)"/></svg>
<div class="abs" style="left:532px;top:227.5px;width:1397px;height:1044px;background:#fff;box-shadow:0.5px 1.5px 2.5px rgba(110,120,115,.55)"></div>
<div class="abs" style="left:532px;top:227.5px;width:4.5px;height:1044px;background:#c3d4d0"></div>
<div class="abs" style="left:532px;top:227.5px;width:1397px;height:1px;background:#bfd1ce"></div>
<div class="abs" style="left:536.5px;top:229.5px;width:1389px;height:1042px;background:#d3dcd7;overflow:hidden">
<svg class="sl" style="left:0;top:0" width="1389" height="1042" viewBox="0 0 1389 1042">
<defs><pattern id="zz" width="7" height="4.5" patternUnits="userSpaceOnUse"><rect width="7" height="4.5" fill="#fffbe9"/><path d="M-0.5 3.6 L1.75 1.2 L3.5 3.6 L5.25 1.2 L7.5 3.6" stroke="#f2b45e" stroke-width="0.85" fill="none"/></pattern><linearGradient id="ts" x1="0" y1="0" x2="0" y2="1"><stop offset="0" stop-color="#fbe0b4"/><stop offset="0.45" stop-color="#fbc676"/><stop offset="1" stop-color="#fb9f1c"/></linearGradient><filter id="sh" x="-5%" y="-20%" width="110%" height="150%"><feDropShadow dx="2.5" dy="3.5" stdDeviation="2.4" flood-color="#58655f" flood-opacity="0.5"/></filter></defs>
<g filter="url(#sh)"><text class="ttl" y="94.0" fill="url(#zz)" stroke="url(#ts)" stroke-width="3.4" stroke-linejoin="round"><tspan class="tl" x="291.0" textLength="506" lengthAdjust="spacingAndGlyphs">SpringBoot</tspan><tspan class="tc" x="799.5" dy="0">框架介绍</tspan></text></g>
<g class="bd">
<text y="288.40"><tspan x="82.8" y="288.40">现如今后台开源框架主流的有</tspan><tspan class="la" x="685.7" dy="-0.3" textLength="67.6" lengthAdjust="spacingAndGlyphs">SSH</tspan><tspan x="755.6" y="288.40">、</tspan><tspan class="la" x="801.7" dy="-0.3" textLength="67.6" lengthAdjust="spacingAndGlyphs">SSM</tspan><tspan x="871.6" y="288.40">、</tspan><tspan class="la" x="917.7" dy="-0.3" textLength="230.0" lengthAdjust="spacing">SpringBoot</tspan><tspan x="1150.0" y="288.40">，但是</tspan></text>
<text y="344.02"><tspan class="la" x="42.0" dy="-0.3" textLength="67.6" lengthAdjust="spacingAndGlyphs">SSH</tspan><tspan x="111.9" y="344.02">、</tspan><tspan class="la" x="158.0" dy="-0.3" textLength="67.6" lengthAdjust="spacingAndGlyphs">SSM</tspan><tspan x="227.9" y="344.02">框架的环境配置项较多，而</tspan><tspan class="la" x="784.4" dy="-0.3" textLength="230.0" lengthAdjust="spacing">SpringBoot</tspan><tspan x="1016.7" y="344.02">主要的设计思</tspan></text>
<text y="399.64"><tspan x="42.3" y="399.64">想就是约定大于配置，故而</tspan><tspan class="la" x="598.8" dy="-0.3" textLength="206.8" lengthAdjust="spacing">SpingBoot</tspan><tspan x="807.9" y="399.64">在设计时几乎达到零配置</tspan></text>
<text y="455.26"><tspan x="42.3" y="455.26">。</tspan><tspan class="la" x="88.4" dy="-0.3" textLength="230.0" lengthAdjust="spacing">SpringBoot</tspan><tspan x="320.7" y="455.26">整合了业界上的开源框架。具体采用技术框架描</tspan></text>
<text y="510.88"><tspan x="42.3" y="510.88">述如下：</tspan></text>
<text y="566.50"><tspan x="42.3" y="566.50">（</tspan><tspan class="la" x="88.4" dy="-0.3" textLength="21.2" lengthAdjust="spacingAndGlyphs">1</tspan><tspan x="111.9" y="566.50">）</tspan><tspan class="la" x="158.0" dy="-0.3" textLength="160.4" lengthAdjust="spacing">Mybatis</tspan><tspan x="320.7" y="566.50">：</tspan><tspan class="la" x="366.8" dy="-0.3" textLength="160.4" lengthAdjust="spacing">Mybatis</tspan><tspan x="529.5" y="566.50">：提供自动映射，动态</tspan><tspan class="la" x="993.2" dy="-0.3" textLength="67.6" lengthAdjust="spacingAndGlyphs">SQL</tspan><tspan x="1063.1" y="566.50">，级联，缓</tspan></text>
<text y="622.12"><tspan x="42.3" y="622.12">存，注解，代码和</tspan><tspan class="la" x="413.2" dy="-0.3" textLength="67.6" lengthAdjust="spacingAndGlyphs">SQL</tspan><tspan x="483.1" y="622.12">分离等特性，使用方便，同时也对</tspan><tspan class="la" x="1178.8" dy="-0.3" textLength="67.6" lengthAdjust="spacingAndGlyphs">SQL</tspan><tspan x="1248.7" y="622.12">进</tspan></text>
<text y="677.74"><tspan x="42.3" y="677.74">行优化。</tspan></text>
<text y="733.36"><tspan x="42.3" y="733.36">（</tspan><tspan class="la" x="88.4" dy="-0.3" textLength="21.2" lengthAdjust="spacingAndGlyphs">2</tspan><tspan x="111.9" y="733.36">）</tspan><tspan class="la" x="158.0" dy="-0.3" textLength="206.8" lengthAdjust="spacingAndGlyphs">SpringMVC</tspan><tspan x="367.1" y="733.36">：通过一套</tspan><tspan class="la" x="598.8" dy="-0.3" textLength="67.6" lengthAdjust="spacingAndGlyphs">MVC</tspan><tspan x="668.7" y="733.36">注解，让</tspan><tspan class="la" x="854.0" dy="-0.3" textLength="90.8" lengthAdjust="spacingAndGlyphs">POJO</tspan><tspan x="947.1" y="733.36">成为处理请求的控</tspan></text>
<text y="788.98"><tspan x="42.3" y="788.98">制器，无需实现任何接口，同时，</tspan><tspan class="la" x="738.0" dy="-0.3" textLength="206.8" lengthAdjust="spacingAndGlyphs">SpringMVC</tspan><tspan x="947.1" y="788.98">还支持</tspan><tspan class="la" x="1086.0" dy="-0.3" textLength="90.8" lengthAdjust="spacingAndGlyphs">REST</tspan><tspan x="1179.1" y="788.98">风格的</tspan></text>
<text y="844.60"><tspan class="la" x="42.0" dy="-0.3" textLength="67.6" lengthAdjust="spacingAndGlyphs">URL</tspan><tspan x="111.9" y="844.60">请求。</tspan></text>
<text y="900.22"><tspan x="42.3" y="900.22">（</tspan><tspan class="la" x="88.4" dy="-0.3" textLength="21.2" lengthAdjust="spacingAndGlyphs">3</tspan><tspan x="111.9" y="900.22">）</tspan><tspan class="la" x="158.0" dy="-0.3" textLength="230.0" lengthAdjust="spacing">SpringBoot</tspan><tspan x="390.3" y="900.22">：从本质上来说，</tspan><tspan class="la" x="761.2" dy="-0.3" textLength="253.2" lengthAdjust="spacing">Spring Boot</tspan><tspan x="1016.7" y="900.22">就是</tspan><tspan class="la" x="1109.2" dy="-0.3" textLength="160.4" lengthAdjust="spacing">Spring,</tspan><tspan x="1271.9" y="900.22">它</tspan></text>
<text y="955.84"><tspan x="42.3" y="955.84">做了那些没有它你也会去做的</tspan><tspan class="la" x="645.2" dy="-0.3" textLength="253.2" lengthAdjust="spacing">Spring Bean</tspan><tspan x="900.7" y="955.84">配置。</tspan></text>
</g></svg>
</div>
<svg style="left:2150.5px;top:192.5px;" width="7" height="6" viewBox="0 0 7 6"><path d="M3.5 0.3 L6.8 5.6 H0.2 Z" fill="#6b7378"/></svg>
<div class="abs" style="left:2148.5px;top:656.5px;width:10.5px;height:147px;background:#d2d6d6;border-radius:5px"></div>
<svg style="left:2149.8px;top:1261px;" width="8" height="6" viewBox="0 0 8 6"><path d="M0.3 0.3 H7.7 L4 5.8 Z" fill="#6f7375"/></svg>
<svg style="left:2149.8px;top:1278.5px;" width="8" height="10" viewBox="0 0 8 10"><path d="M4 0.2 L7.6 4.6 H0.4 Z M4 4.8 L7.6 9.4 H0.4 Z" fill="#6f7375"/></svg>
<svg style="left:2149.8px;top:1298.5px;" width="8" height="10" viewBox="0 0 8 10"><path d="M0.4 0.4 H7.6 L4 4.9 Z M0.4 5 H7.6 L4 9.6 Z" fill="#6f7375"/></svg>
<!-- gen_right.right -->
<div class="abs" style="left:2164px;top:185px;width:1px;height:1175px;background:rgba(90,110,110,.2)"></div>
<div class="abs" style="left:2490px;top:185px;width:1px;height:1175px;background:rgba(90,110,110,.16)"></div>
<svg style="left:2411.5px;top:206.5px;" width="18" height="18" viewBox="0 0 18 18"><g fill="none" stroke="#3d4757" stroke-width="1.4" stroke-linecap="round" stroke-linejoin="round"><path d="M10.5 1.2 L16.8 7.5 L14.8 8.2 L11.5 11.5 L11.2 15 L3 6.8 L6.5 6.5 L9.8 3.2 Z"/><path d="M7 11 L1.2 16.8"/></g></svg>
<svg style="left:2448.5px;top:209px;" width="13" height="13" viewBox="0 0 13 13"><path d="M0.8 0.8 L12.2 12.2 M12.2 0.8 L0.8 12.2" fill="none" stroke="#3d4757" stroke-width="1.5" stroke-linecap="round" stroke-linejoin="round"/></svg>
<div class="abs" style="left:2309.5px;top:296px;width:161px;height:29.5px;background:#fff;border:1px solid #cfd8d7;border-radius:4px"></div>
<svg style="left:2451px;top:308.25px" width="11" height="5.5" viewBox="0 0 11 5.5"><path d="M0.4 0.3 L5.5 5.2 L10.6 0.3" fill="none" stroke="#3d4757" stroke-width="1.4" stroke-linecap="round" stroke-linejoin="round"/></svg>
<span class="t u" style="left:2229.5px;top:353px;font-size:15px;">纯色填充(<u>S</u>)</span>
<div class="abs" style="left:2207px;top:352px;width:16.5px;height:16.5px;border:1.3px solid #8b949b;border-radius:50%;background:#fff"></div>
<div class="abs" style="left:2207px;top:391.3px;width:16.5px;height:16.5px;border:1.3px solid #8b949b;border-radius:50%;background:rgba(255,255,255,.55)"></div>
<span class="t u" style="left:2229.5px;top:392.1px;font-size:15px;">渐变填充(<u>G</u>)</span>
<div class="abs" style="left:2207px;top:429.9px;width:16.5px;height:16.5px;border:1.3px solid #8b949b;border-radius:50%;background:rgba(255,255,255,.55)"></div>
<span class="t u" style="left:2229.5px;top:430.7px;font-size:15px;">图片或纹理填充(<u>P</u>)</span>
<div class="abs" style="left:2207px;top:469.2px;width:16.5px;height:16.5px;border:1.3px solid #8b949b;border-radius:50%;background:rgba(255,255,255,.55)"></div>
<span class="t u" style="left:2229.5px;top:470px;font-size:15px;">图案填充(<u>A</u>)</span>
<div class="abs" style="left:2207px;top:507.7px;width:16.5px;height:16.5px;border:1.3px solid #8b949b;border-radius:3px;background:rgba(255,255,255,.55)"></div>
<span class="t u" style="left:2229.5px;top:508.5px;font-size:15px;">隐藏背景图形(<u>H</u>)</span>
<span class="t u" style="left:2199.5px;top:548.5px;font-size:15px;">颜色(<u>C</u>)</span>
<div class="abs" style="left:2309.5px;top:542px;width:161px;height:29.5px;background:#fff;border:1px solid #cfd8d7;border-radius:4px"></div>
<svg style="left:2451px;top:554.25px" width="11" height="5.5" viewBox="0 0 11 5.5"><path d="M0.4 0.3 L5.5 5.2 L10.6 0.3" fill="none" stroke="#3d4757" stroke-width="1.4" stroke-linecap="round" stroke-linejoin="round"/></svg>
<span class="t u" style="left:2199.5px;top:589px;font-size:15px;">透明度(<u>T</u>)</span>
<div class="abs" style="left:2292px;top:595.5px;width:66px;height:1.6px;background:#b9c0c2"></div>
<div class="abs" style="left:2277px;top:588px;width:16.5px;height:16.5px;border:1.2px solid #c3c8cb;border-radius:50%;background:#fff"></div>
<div class="abs" style="left:2281px;top:592px;width:8.5px;height:8.5px;border-radius:50%;background:#9aa0a5"></div>
<div class="abs" style="left:2364px;top:582.5px;width:106.5px;height:29.5px;background:#fff;border:1px solid #cfd8d7;border-radius:4px"></div>
<span class="t" style="left:2376.5px;top:589px;font-size:16px;">0</span>
<span class="t" style="left:2432px;top:588.5px;font-size:16px;">%</span>
<svg style="left:2455px;top:586.5px;" width="10" height="5.5" viewBox="0 0 10 5.5"><path d="M0.8 4.8 L5 0.8 L9.2 4.8" fill="none" stroke="#555d66" stroke-width="1.3" stroke-linecap="round" stroke-linejoin="round"/></svg>
<svg style="left:2455px;top:600.5px;" width="10" height="5.5" viewBox="0 0 10 5.5"><path d="M0.8 0.8 L5 4.8 L9.2 0.8" fill="none" stroke="#555d66" stroke-width="1.3" stroke-linecap="round" stroke-linejoin="round"/></svg>
<div class="abs" style="left:2185.5px;top:1315.5px;width:73.5px;height:28.5px;background:#fff;border:1px solid #d5d3cf;border-radius:4px"></div>
<span class="t u" style="left:2185.5px;top:1322.5px;font-size:15px;width:73.5px;text-align:center;">全部应用</span>
<div class="abs" style="left:2269.5px;top:1315.5px;width:74px;height:28.5px;background:#ebe7e2;border:1px solid #dcd8d3;border-radius:4px"></div>
<span class="t u" style="left:2269.5px;top:1322.5px;font-size:15px;color:#a5a5a3;width:74px;text-align:center;">重置背景</span>
<svg style="left:2232px;top:195.5px;" width="16" height="11" viewBox="0 0 16 11"><path d="M8 0.5 L15.5 11 H0.5 Z" fill="#2069e0"/></svg>
<div class="abs" style="left:1867px;top:205.5px;width:438.5px;height:185.5px;background:#2069e0;border-radius:6px"></div>
<svg style="left:1889px;top:228px;" width="26" height="24" viewBox="0 0 26 24"><circle cx="12.5" cy="12.5" r="6" fill="#ffb84d"/><rect x="9.5" y="20" width="6" height="2.2" rx="1" fill="#ffb84d"/><g stroke="#ffc870" stroke-width="1.6" stroke-linecap="round"><path d="M12.5 1 V3 M4.5 4.5 L6 6 M20.5 4.5 L19 6 M1 12.5 H3.2 M21.8 12.5 H24"/></g></svg>
<span class="t u" style="left:1932px;top:231.8px;font-size:17px;color:#fff;font-weight:700;letter-spacing:0.25px;">云文档问答助手上线啦!</span>
<svg style="left:2266px;top:235px;" width="12" height="12" viewBox="0 0 12 12"><path d="M0.8 0.8 L11.2 11.2 M11.2 0.8 L0.8 11.2" stroke="#fff" stroke-width="1.5" stroke-linecap="round"/></svg>
<div class="abs" style="left:1889px;top:274px;width:400px;font-size:17px;line-height:23px;color:#fff;white-space:normal;word-break:break-all;font-weight:350">帮你快速从自己的云文档中找答案，不用打开文档查看</div>
<div class="abs" style="left:2173px;top:334px;width:110px;height:40px;background:#fff;border-radius:6px"></div>
<span class="t u" style="left:2173px;top:346px;font-size:17px;width:110px;text-align:center;">立即体验</span>
<svg style="left:2515px;top:214px;" width="19" height="2" viewBox="0 0 19 2"><path d="M0.7 1 H18.3" stroke="#6b7379" stroke-width="1.3" stroke-linecap="round"/></svg>
<div class="abs" style="left:2503px;top:235px;width:44.5px;height:54.5px;background:#c6dad7;border-radius:6px"></div>
<span class="t u" style="left:2510px;top:266.3px;font-size:15px;width:30px;text-align:center;">属性</span>
<span class="t u" style="left:2510px;top:330.8px;font-size:15px;width:30px;text-align:center;">动画</span>
<span class="t u" style="left:2510px;top:395.8px;font-size:15px;width:30px;text-align:center;">切换</span>
<span class="t u" style="left:2510px;top:460.7px;font-size:15px;width:30px;text-align:center;">美化</span>
<span class="t u" style="left:2510px;top:526px;font-size:15px;width:30px;text-align:center;">主题</span>
<span class="t u" style="left:2510px;top:590.9px;font-size:15px;width:30px;text-align:center;">素材</span>
<span class="t u" style="left:2510px;top:655.8px;font-size:15px;width:30px;text-align:center;">文库</span>
<span class="t u" style="left:2510px;top:720.9px;font-size:15px;width:30px;text-align:center;">帮助</span>
<svg style="left:2514px;top:240.5px;" width="22" height="22" viewBox="0 0 22 22"><g fill="none" stroke="#3d4757" stroke-width="1.4" stroke-linecap="round" stroke-linejoin="round"><path d="M1 6 H6 M12 6 H21 M1 16 H11 M17 16 H21"/><circle cx="9" cy="6" r="3"/><circle cx="14" cy="16" r="3"/></g></svg>
<svg style="left:2514px;top:305px;" width="22" height="22" viewBox="0 0 22 22"><g fill="none" stroke="#3d4757" stroke-width="1.4" stroke-linecap="round" stroke-linejoin="round"><path d="M12.5 1.5 L15.3 7.6 L21.5 8.3 L16.9 12.6 L18.2 19 L12.5 15.8 L9 17.8"/><path d="M12.5 1.5 L9.8 7.6 L4 8.3"/><path d="M1 12 H7 M1 15.5 H6 M1 19 H5"/></g></svg>
<svg style="left:2514px;top:370px;" width="22" height="22" viewBox="0 0 22 22"><g fill="none" stroke="#3d4757" stroke-width="1.4" stroke-linecap="round" stroke-linejoin="round"><rect x="3" y="1" width="11" height="10" rx="1.5"/><rect x="8" y="7.5" width="12.5" height="11" rx="1.5" fill="#e3eeec"/><path d="M1.5 13 V18 C1.5 19.5 2.3 20.5 4 20.5 H6 M4.5 18.5 L6.5 20.5 L4.5 22.5" /></g></svg>
<svg style="left:2514px;top:435px;" width="22" height="22" viewBox="0 0 22 22"><g fill="none" stroke="#3d4757" stroke-width="1.4" stroke-linecap="round" stroke-linejoin="round"><path d="M2 18.5 L13 7.5 L15.5 10 L4.5 21 Z"/><path d="M16.5 1 L17.5 3.5 L20 4.5 L17.5 5.5 L16.5 8 L15.5 5.5 L13 4.5 L15.5 3.5 Z M7 2.5 L7.7 4.3 L9.5 5 L7.7 5.7 L7 7.5 L6.3 5.7 L4.5 5 L6.3 4.3 Z M19 12 L19.7 13.8 L21.5 14.5 L19.7 15.2 L19 17 L18.3 15.2 L16.5 14.5 L18.3 13.8 Z" stroke-width="1.1"/></g></svg>
<svg style="left:2514px;top:500px;" width="22" height="22" viewBox="0 0 22 22"><g fill="none" stroke="#3d4757" stroke-width="1.4" stroke-linecap="round" stroke-linejoin="round"><path d="M8 1.5 C8 3.5 9.5 4.8 11.5 4.8 C13.5 4.8 15 3.5 15 1.5 L21.5 4.5 L19.5 9.5 L17 8.8 V12"/><path d="M8 1.5 L1.5 4.5 L3.5 9.5 L6 8.8 V20.5 H11"/><path d="M17 13 L18.2 16 L21.2 17 L18.2 18 L17 21 L15.8 18 L12.8 17 L15.8 16 Z" stroke-width="1.2"/></g></svg>
<svg style="left:2514px;top:565px;" width="22" height="22" viewBox="0 0 22 22"><g fill="none" stroke="#3d4757" stroke-width="1.4" stroke-linecap="round" stroke-linejoin="round"><path d="M6 8 C3 8 1.5 6.5 1.5 4.5 C1.5 2.5 3 1 5 1 H17 C19.5 1 21 2.5 21 5 V16 C21 18.5 19.5 20 17 20 H5.5 V6"/><path d="M12.5 17 C9 14 9.5 9.5 12.5 6.5 C15.5 9.5 16 14 12.5 17 Z M12.5 17 V11 M16 16 C18 15 19 13 18.5 10.5"/></g></svg>
<svg style="left:2514px;top:630px;" width="22" height="22" viewBox="0 0 22 22"><g fill="none" stroke="#3d4757" stroke-width="1.4" stroke-linecap="round" stroke-linejoin="round"><path d="M11 18.5 L2 16.5 V2 L11 4.5 L20 2 V10"/><path d="M11 4.5 V12"/><circle cx="16" cy="15.5" r="3.6"/><path d="M18.7 18.2 L21.3 20.8"/></g></svg>
<svg style="left:2514px;top:694.5px;" width="22" height="22" viewBox="0 0 22 22"><g fill="none" stroke="#3d4757" stroke-width="1.4" stroke-linecap="round" stroke-linejoin="round"><circle cx="11" cy="11" r="9.8"/><path d="M7.8 8.8 C7.8 6.8 9.2 5.6 11 5.6 C12.8 5.6 14.2 6.8 14.2 8.4 C14.2 10.6 11 10.6 11 13.2"/></g><circle cx="11" cy="16.2" r="1" fill="#3d4757"/></svg>
<svg style="left:2514px;top:759.5px;" width="22" height="22" viewBox="0 0 22 22"><g fill="none" stroke="#3d4757" stroke-width="1.4" stroke-linecap="round" stroke-linejoin="round"><path d="M4 2.5 H18 C19.2 2.5 20 3.3 20 4.5 V13.5 C20 14.7 19.2 15.5 18 15.5 H8 L3 19.5 V15.5 H4 C2.8 15.5 2 14.7 2 13.5 V4.5 C2 3.3 2.8 2.5 4 2.5 Z"/></g></svg>
<svg style="left:2514.5px;top:832px;" width="21" height="7" viewBox="0 0 21 7"><g fill="none" stroke="#3d4757" stroke-width="1.3"><circle cx="3" cy="3.5" r="2.2"/><circle cx="10.5" cy="3.5" r="2.2"/><circle cx="18" cy="3.5" r="2.2"/></g></svg>
<span class="t u" style="left:2510px;top:850.8px;font-size:15px;width:30px;text-align:center;">设置</span>
<div class="abs" style="left:2481px;top:788px;width:75.5px;height:31px;background:#050505;border-radius:7px;box-shadow:0 1px 4px rgba(0,0,0,.4)"></div>
<span class="t" style="left:2486.5px;top:795.25px;font-size:16.5px;color:#fff;">CH</span>
<svg style="left:2515.5px;top:795px;" width="14" height="16" viewBox="0 0 14 16"><path d="M8 1.5 C11.5 2.5 13 5.5 12.5 8.5 C12 12 9 14.5 5.5 14.5 C3.5 14.5 2 13.8 1 12.8 C5.5 13 8.5 10 8.5 6.5 C8.5 4.5 8.3 3 8 1.5 Z" fill="none" stroke="#fff" stroke-width="1.4" stroke-linejoin="round"/></svg>
<span class="t u" style="left:2533px;top:795.5px;font-size:16px;color:#9a9a9a;">简</span>
<!-- gen_bottom.bottom -->
<div class="abs" style="left:376px;top:1319px;width:1788px;height:1px;background:#d6d3cf"></div>
<span class="t u" style="left:389px;top:1329.25px;font-size:16.5px;color:#8f8f8d;">单击此处添加备注</span>
<div class="abs" style="left:527.5px;top:1322.5px;width:105px;height:30.5px;background:#f3eeea;border:1px solid #dad7d3;border-radius:4px"></div>
<svg style="left:535px;top:1329px;" width="17" height="17" viewBox="0 0 17 17"><g fill="none" stroke="#8b8b8b" stroke-width="1.3" stroke-linecap="round" stroke-linejoin="round"><path d="M8 12.5 H2 C1.4 12.5 1 12.1 1 11.5 V2 C1 1.4 1.4 1 2 1 H14 C14.6 1 15 1.4 15 2 V6.5"/><path d="M4 4.5 H12 M4 8 H8"/></g><path d="M12 8 L13 11 L16 12 L13 13 L12 16 L11 13 L8 12 L11 11 Z" fill="#c9a6f3" stroke="#a46bea" stroke-width="0.9" stroke-linejoin="round"/></svg>
<span class="t u" style="left:556px;top:1329.5px;font-size:16px;color:#5f5f5f;">AI 演讲稿</span>
<div class="abs" style="left:0px;top:1360px;width:2560px;height:1px;background:#d9d5d0"></div>
<span class="t u" style="left:16.5px;top:1367.75px;font-size:15.5px;">幻灯片 4 / 7</span>
<div class="abs" style="left:108px;top:1366px;width:1px;height:18px;background:#d3cfca"></div>
<svg style="left:126px;top:1366px;" width="18" height="18" viewBox="0 0 18 18"><g fill="none" stroke="#3d4757" stroke-width="1.4" stroke-linecap="round" stroke-linejoin="round"><path d="M6 1 C6 2.6 7.2 3.6 8.8 3.6 C10.4 3.6 11.6 2.6 11.6 1 L16.5 3.3 L15 7.2 L13 6.6 V9"/><path d="M6 1 L1.1 3.3 L2.6 7.2 L4.6 6.6 V16 H9"/><path d="M13.2 10 L14.2 12.5 L16.8 13.4 L14.2 14.3 L13.2 16.8 L12.2 14.3 L9.6 13.4 L12.2 12.5 Z" stroke-width="1.1"/></g></svg>
<span class="t u" style="left:150px;top:1367.75px;font-size:15.5px;">Office 主题</span>
<div class="abs" style="left:245px;top:1366px;width:1px;height:18px;background:#d3cfca"></div>
<svg style="left:264.5px;top:1366.5px;" width="17" height="18" viewBox="0 0 17 18"><g fill="none" stroke="#3d4757" stroke-width="1.4" stroke-linecap="round" stroke-linejoin="round"><path d="M7 16.5 H2.2 C1.5 16.5 1 16 1 15.3 V2.2 C1 1.5 1.5 1 2.2 1 H12.5 C13.2 1 13.7 1.5 13.7 2.2 V6"/><path d="M4 5.5 L5.8 7.3 L9 4"/><circle cx="10.5" cy="11.5" r="3.6"/><path d="M13.2 14.2 L16 17"/></g></svg>
<span class="t u" style="left:287px;top:1367.75px;font-size:15.5px;">校对</span>
<div class="abs" style="left:334px;top:1366px;width:1px;height:18px;background:#d3cfca"></div>
<svg style="left:355px;top:1368.5px;" width="14" height="13" viewBox="0 0 14 13"><path d="M7 0.6 L13.6 12.4 H0.4 Z" fill="#f5a623" stroke="#f5a623" stroke-width="0.8" stroke-linejoin="round"/><path d="M7 4.5 V8.3" stroke="#fff" stroke-width="1.4" stroke-linecap="round"/><circle cx="7" cy="10.4" r="0.85" fill="#fff"/></svg>
<span class="t u" style="left:378px;top:1367.75px;font-size:15.5px;">缺失字体</span>
<svg style="left:1697px;top:1366.5px;" width="17" height="18" viewBox="0 0 17 18"><g fill="none" stroke="#3d4757" stroke-width="1.4" stroke-linecap="round" stroke-linejoin="round"><path d="M8.5 1 L15.5 4.5 V9 M8.5 1 L1.5 4.5 V13.5 L8.5 17 L12 15.2"/><path d="M1.5 4.5 L8.5 8 L15.5 4.5"/></g></svg>
<span class="t u" style="left:1720px;top:1367.75px;font-size:15.5px;">智能美化</span>
<svg style="left:1786px;top:1374.2px" width="6.5" height="3.6" viewBox="0 0 6.5 3.6"><path d="M0.4 0.3 L3.25 3.3 L6.1 0.3" fill="none" stroke="#1f2329" stroke-width="1.6" stroke-linecap="round" stroke-linejoin="round"/></svg>
<div class="abs" style="left:1811px;top:1366px;width:1px;height:18px;background:#d3cfca"></div>
<svg style="left:1832px;top:1369px;" width="15" height="13" viewBox="0 0 15 13"><path d="M0.8 1 H14.2 M0.8 6.5 H14.2 M0.8 12 H14.2" fill="none" stroke="#3d4757" stroke-width="1.4" stroke-linecap="round" stroke-linejoin="round"/></svg>
<span class="t u" style="left:1854px;top:1367.75px;font-size:15.5px;">备注</span>
<svg style="left:1889px;top:1374.2px" width="6.5" height="3.6" viewBox="0 0 6.5 3.6"><path d="M0.4 0.3 L3.25 3.3 L6.1 0.3" fill="none" stroke="#1f2329" stroke-width="1.6" stroke-linecap="round" stroke-linejoin="round"/></svg>
<svg style="left:1922.5px;top:1367px;" width="19" height="18" viewBox="0 0 19 18"><g fill="none" stroke="#3d4757" stroke-width="1.4" stroke-linecap="round" stroke-linejoin="round"><path d="M12 13.5 H7 L2 17 V13.5 C1.4 13.5 1 13.1 1 12.5 V2 C1 1.4 1.4 1 2 1 H15.5 C16.1 1 16.5 1.4 16.5 2 V9"/><path d="M15.5 11.5 V17 M12.8 14.2 H18.2"/></g></svg>
<span class="t u" style="left:1947.5px;top:1367.75px;font-size:15.5px;">批注</span>
<div class="abs" style="left:1994px;top:1366px;width:1px;height:18px;background:#d3cfca"></div>
<div class="abs" style="left:2005.5px;top:1361px;width:29px;height:25px;background:#dcd8d4;border-radius:4px 4px 0 0"></div>
<svg style="left:2011px;top:1367.5px;" width="18" height="15" viewBox="0 0 18 15"><g fill="none" stroke="#3d4757" stroke-width="1.5" stroke-linecap="round" stroke-linejoin="round"><rect x="0.8" y="0.8" width="16.4" height="13.4" rx="1.2"/><path d="M6 3.5 V11.5"/></g></svg>
<svg style="left:2051px;top:1367.5px;" width="18" height="15" viewBox="0 0 18 15"><g fill="none" stroke="#3d4757" stroke-width="1.5" stroke-linecap="round" stroke-linejoin="round"><rect x="0.8" y="0.8" width="6.4" height="5.2" rx="1"/><rect x="10.8" y="0.8" width="6.4" height="5.2" rx="1"/><rect x="0.8" y="9" width="6.4" height="5.2" rx="1"/><rect x="10.8" y="9" width="6.4" height="5.2" rx="1"/></g></svg>
<svg style="left:2092.5px;top:1367.5px;" width="18" height="16" viewBox="0 0 18 16"><g fill="none" stroke="#3d4757" stroke-width="1.5" stroke-linecap="round" stroke-linejoin="round"><path d="M9 3 C7 1.2 4 0.8 1 1.5 V13 C4 12.3 7 12.8 9 14.8 C11 12.8 14 12.3 17 13 V1.5 C14 0.8 11 1.2 9 3 Z M9 3 V14.5"/></g></svg>
<div class="abs" style="left:2125.5px;top:1366px;width:1px;height:18px;background:#d3cfca"></div>
<div class="abs" style="left:2139px;top:1364px;width:24px;height:23px;background:#e8681c;border-radius:4px 4px 0 0"></div>
<svg style="left:2147px;top:1369px;" width="9" height="12" viewBox="0 0 9 12"><path d="M1 1 L8.3 6 L1 11 Z" fill="#fff" stroke="#fff" stroke-width="0.8" stroke-linejoin="round"/></svg>
<svg style="left:2174px;top:1374.2px" width="6.5" height="3.6" viewBox="0 0 6.5 3.6"><path d="M0.4 0.3 L3.25 3.3 L6.1 0.3" fill="none" stroke="#1f2329" stroke-width="1.6" stroke-linecap="round" stroke-linejoin="round"/></svg>
<div class="abs" style="left:2196px;top:1366px;width:1px;height:18px;background:#d3cfca"></div>
<svg style="left:2214px;top:1366.5px;" width="18" height="17" viewBox="0 0 18 17"><g fill="none" stroke="#3d4757" stroke-width="1.5" stroke-linecap="round" stroke-linejoin="round"><path d="M1 5 V2.5 C1 1.6 1.6 1 2.5 1 H5 M13 1 H15.5 C16.4 1 17 1.6 17 2.5 V5 M17 12 V14.5 C17 15.4 16.4 16 15.5 16 H13 M5 16 H2.5 C1.6 16 1 15.4 1 14.5 V12"/><rect x="5.3" y="5.2" width="7.4" height="6.6" rx="0.8"/></g></svg>
<span class="t" style="left:2257px;top:1367.75px;font-size:15.5px;">116%</span>
<svg style="left:2311px;top:1374.2px" width="6.5" height="3.6" viewBox="0 0 6.5 3.6"><path d="M0.4 0.3 L3.25 3.3 L6.1 0.3" fill="none" stroke="#1f2329" stroke-width="1.6" stroke-linecap="round" stroke-linejoin="round"/></svg>
<svg style="left:2340px;top:1374px;" width="16" height="3" viewBox="0 0 16 3"><path d="M1 1.5 H15" stroke="#1f2329" stroke-width="2" stroke-linecap="round"/></svg>
<div class="abs" style="left:2372px;top:1374.2px;width:70px;height:1.6px;background:#2e6be0"></div>
<div class="abs" style="left:2442px;top:1374.5px;width:62px;height:1.2px;background:#cfccc8"></div>
<div class="abs" style="left:2437px;top:1370.5px;width:9px;height:9px;background:#fff;border:1px solid #c9c9c9;border-radius:50%"></div>
<div class="abs" style="left:2439.7px;top:1373.2px;width:3.6px;height:3.6px;background:#9a9a9a;border-radius:50%"></div>
<svg style="left:2522px;top:1367.5px;" width="15" height="15" viewBox="0 0 15 15"><path d="M7.5 1 V14 M1 7.5 H14" stroke="#1f2329" stroke-width="2" stroke-linecap="round"/></svg>
</body>
</html>
